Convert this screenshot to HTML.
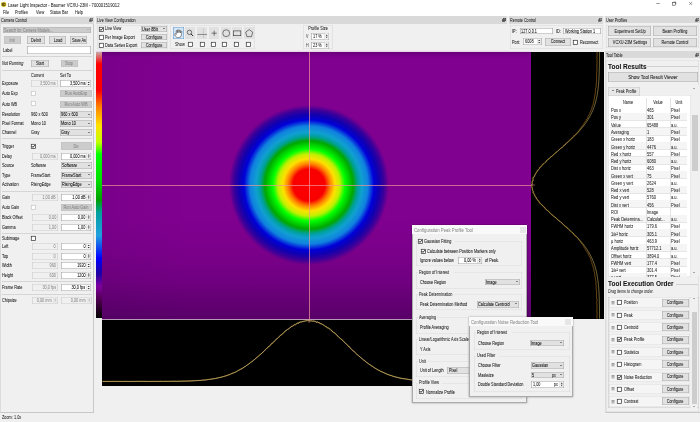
<!DOCTYPE html><html><head><meta charset="utf-8"><style>
html,body{margin:0;padding:0;width:700px;height:422px;overflow:hidden;background:#f0f0f0;font-family:"Liberation Sans",sans-serif;position:relative}
.t{position:absolute;white-space:nowrap;font-family:"Liberation Sans",sans-serif;-webkit-text-stroke:0.04px currentColor}
.r{position:absolute;box-sizing:border-box}svg{overflow:visible}
</style></head><body><div id="root" style="position:absolute;left:0;top:0;width:700px;height:422px;overflow:hidden;will-change:transform">
<div class="r" style="left:0px;top:0px;width:700px;height:16px;background:#ffffff;"></div>
<svg class="r" style="left:0.8px;top:1.6px" width="5.4" height="4.8" viewBox="0 0 11 10"><rect x="0.3" y="0.3" width="10.4" height="9.4" rx="3" fill="#e3c400"/><path d="M2.6 2 V8 M4.6 2 V8 H6.2 Q8.6 8 8.6 5 Q8.6 2 6.2 2 Z" fill="none" stroke="#222" stroke-width="1.5"/></svg>
<div class="t" style="left:8.20px;transform-origin:0 50%;top:1.50px;font-size:5.24px;line-height:6.81px;color:#222;transform:scaleX(0.800);">Laser Light Inspector - Baumer VCXU-23M - 700001519012</div>
<svg class="r" style="left:0;top:0" width="700" height="16" viewBox="0 0 700 16"><path d="M656.3 3.5 H659.8" stroke="#333" stroke-width="0.5"/><rect x="672.6" y="2.6" width="2.6" height="2.6" fill="none" stroke="#333" stroke-width="0.5"/><path d="M673.4 2 H675.8 V4.4" fill="none" stroke="#333" stroke-width="0.5"/><path d="M689.3 2.1 L692.1 4.9 M692.1 2.1 L689.3 4.9" stroke="#333" stroke-width="0.5"/></svg>
<div class="t" style="left:3.00px;transform-origin:0 50%;top:9.87px;font-size:4.81px;line-height:6.26px;color:#222;transform:scaleX(0.800);">File</div>
<div class="t" style="left:15.00px;transform-origin:0 50%;top:9.87px;font-size:4.81px;line-height:6.26px;color:#222;transform:scaleX(0.800);">Profiles</div>
<div class="t" style="left:35.50px;transform-origin:0 50%;top:9.87px;font-size:4.81px;line-height:6.26px;color:#222;transform:scaleX(0.800);">View</div>
<div class="t" style="left:50.00px;transform-origin:0 50%;top:9.87px;font-size:4.81px;line-height:6.26px;color:#222;transform:scaleX(0.800);">Status Bar</div>
<div class="t" style="left:75.00px;transform-origin:0 50%;top:9.87px;font-size:4.81px;line-height:6.26px;color:#222;transform:scaleX(0.800);">Help</div>
<div class="r" style="left:0px;top:16.5px;width:93.5px;height:7.199999999999999px;background:#d9d9d9;"></div>
<div class="t" style="left:1.20px;transform-origin:0 50%;top:17.99px;font-size:4.62px;line-height:6.01px;color:#222;transform:scaleX(0.800);">Camera Control</div>
<svg class="r" style="left:88.5px;top:18.1px" width="4" height="4" viewBox="0 0 8 8"><rect x="2.5" y="0.5" width="5" height="5" fill="none" stroke="#444" stroke-width="1"/><rect x="0.5" y="2.5" width="5" height="5" fill="#555"/></svg>
<div class="r" style="left:0px;top:23.7px;width:93.5px;height:389.3px;background:#f0f0f0;border-right:0.8px solid #c8c8c8;border-bottom:0.8px solid #c8c8c8;border-left:0.8px solid #dcdcdc"></div>
<div class="r" style="left:3.1px;top:26.5px;width:87.60000000000001px;height:6.700000000000003px;background:#cccccc;box-shadow:inset 0 0 0 0.6px #adadad;"></div>
<div class="t" style="left:4.30px;transform-origin:0 50%;top:27.62px;font-size:4.81px;line-height:6.26px;color:#838383;transform:scaleX(0.800);">Search for Camera Models...</div>
<div class="r" style="left:86.7px;top:29.25px;width:0;height:0;border-left:1.3px solid transparent;border-right:1.3px solid transparent;border-top:1.5px solid #999"></div>
<div class="r" style="left:3.6px;top:36px;width:17.4px;height:7.899999999999999px;background:#cccccc;box-shadow:inset 0 0 0 0.6px #bfbfbf;"></div>
<div class="t" style="left:-37.70px;width:100px;text-align:center;transform-origin:50% 50%;top:37.72px;font-size:4.81px;line-height:6.26px;color:#838383;transform:scaleX(0.800);">Init</div>
<div class="r" style="left:27.3px;top:36px;width:17.499999999999996px;height:7.899999999999999px;background:#e1e1e1;box-shadow:inset 0 0 0 0.6px #adadad;"></div>
<div class="t" style="left:-13.95px;width:100px;text-align:center;transform-origin:50% 50%;top:37.72px;font-size:4.81px;line-height:6.26px;color:#111;transform:scaleX(0.800);">DeInit</div>
<div class="r" style="left:49.2px;top:36px;width:17.200000000000003px;height:7.899999999999999px;background:#e1e1e1;box-shadow:inset 0 0 0 0.6px #adadad;"></div>
<div class="t" style="left:7.80px;width:100px;text-align:center;transform-origin:50% 50%;top:37.72px;font-size:4.81px;line-height:6.26px;color:#111;transform:scaleX(0.800);">Load</div>
<div class="r" style="left:70.3px;top:36px;width:17.200000000000003px;height:7.899999999999999px;background:#e1e1e1;box-shadow:inset 0 0 0 0.6px #adadad;"></div>
<div class="t" style="left:28.90px;width:100px;text-align:center;transform-origin:50% 50%;top:37.72px;font-size:4.81px;line-height:6.26px;color:#111;transform:scaleX(0.800);">Save As</div>
<div class="t" style="left:3.00px;transform-origin:0 50%;top:47.77px;font-size:4.81px;line-height:6.26px;color:#111;transform:scaleX(0.800);">Label</div>
<div class="r" style="left:27px;top:46.3px;width:63.5px;height:7.300000000000004px;background:#ffffff;box-shadow:inset 0 0 0 0.6px #a0a0a0;"></div>
<div class="t" style="right:611.00px;transform-origin:100% 50%;top:47.72px;font-size:4.81px;line-height:6.26px;color:#000;transform:scaleX(0.800);"></div>
<div class="r" style="left:2px;top:55.7px;width:89.5px;height:0.6000000000000014px;background:#d5d5d5;"></div>
<div class="t" style="left:2.00px;transform-origin:0 50%;top:61.27px;font-size:4.81px;line-height:6.26px;color:#111;font-style:italic;transform:scaleX(0.800);">Not Running</div>
<div class="r" style="left:31px;top:59.5px;width:18px;height:7.5px;background:#e1e1e1;box-shadow:inset 0 0 0 0.6px #adadad;"></div>
<div class="t" style="left:-10.00px;width:100px;text-align:center;transform-origin:50% 50%;top:61.02px;font-size:4.81px;line-height:6.26px;color:#111;transform:scaleX(0.800);">Start</div>
<div class="r" style="left:60.5px;top:59.5px;width:17.5px;height:7.5px;background:#cccccc;box-shadow:inset 0 0 0 0.6px #bfbfbf;"></div>
<div class="t" style="left:19.25px;width:100px;text-align:center;transform-origin:50% 50%;top:61.02px;font-size:4.81px;line-height:6.26px;color:#838383;transform:scaleX(0.800);">Stop</div>
<div class="r" style="left:2px;top:69.5px;width:89.5px;height:0.5999999999999943px;background:#d5d5d5;"></div>
<div class="t" style="left:31.00px;transform-origin:0 50%;top:73.27px;font-size:4.81px;line-height:6.26px;color:#111;transform:scaleX(0.800);">Current</div>
<div class="t" style="left:60.00px;transform-origin:0 50%;top:73.27px;font-size:4.81px;line-height:6.26px;color:#111;transform:scaleX(0.800);">Set To</div>
<div class="t" style="left:2.00px;transform-origin:0 50%;top:81.17px;font-size:4.81px;line-height:6.26px;color:#111;transform:scaleX(0.800);">Exposure</div>
<div class="r" style="left:31px;top:80px;width:26.5px;height:7px;background:#f0f0f0;box-shadow:inset 0 0 0 0.6px #cccccc;"></div>
<div class="t" style="right:644.00px;transform-origin:100% 50%;top:81.27px;font-size:4.81px;line-height:6.26px;color:#8a8a8a;transform:scaleX(0.800);">3,500 ms</div>
<div class="r" style="left:60px;top:80px;width:31px;height:7px;background:#ffffff;box-shadow:inset 0 0 0 0.6px #a0a0a0;"></div>
<div class="t" style="right:614.60px;transform-origin:100% 50%;top:81.27px;font-size:4.81px;line-height:6.26px;color:#000;transform:scaleX(0.800);">3,500 ms</div>
<svg class="r" style="left:0;top:0" width="1" height="1" viewBox="0 0 1 1"><rect x="86.70" y="80.60" width="3.7" height="5.80" fill="#f4f4f4" stroke="#c8c8c8" stroke-width="0.4"/><path d="M87.70 83.00 L89.70 83.00 L88.70 81.70 Z M87.70 84.00 L89.70 84.00 L88.70 85.30 Z" fill="#222"/></svg>
<div class="t" style="left:2.00px;transform-origin:0 50%;top:91.47px;font-size:4.81px;line-height:6.26px;color:#111;transform:scaleX(0.800);">Auto Exp</div>
<svg class="r" style="left:31px;top:90.9px" width="4.7" height="4.7" viewBox="0 0 10 10"><rect x="0.6" y="0.6" width="8.8" height="8.8" fill="#fff" stroke="#c4c4c4" stroke-width="1.5"/></svg>
<div class="r" style="left:60px;top:90px;width:31.5px;height:7px;background:#cccccc;box-shadow:inset 0 0 0 0.6px #bfbfbf;"></div>
<div class="t" style="left:25.75px;width:100px;text-align:center;transform-origin:50% 50%;top:91.27px;font-size:4.81px;line-height:6.26px;color:#838383;transform:scaleX(0.800);">Run AutoExp</div>
<div class="t" style="left:2.00px;transform-origin:0 50%;top:101.77px;font-size:4.81px;line-height:6.26px;color:#111;transform:scaleX(0.800);">Auto WB</div>
<svg class="r" style="left:31px;top:101.1px" width="4.7" height="4.7" viewBox="0 0 10 10"><rect x="0.6" y="0.6" width="8.8" height="8.8" fill="#fff" stroke="#c4c4c4" stroke-width="1.5"/></svg>
<div class="r" style="left:60px;top:100.5px;width:31.5px;height:7.0px;background:#cccccc;box-shadow:inset 0 0 0 0.6px #bfbfbf;"></div>
<div class="t" style="left:25.75px;width:100px;text-align:center;transform-origin:50% 50%;top:101.77px;font-size:4.81px;line-height:6.26px;color:#838383;transform:scaleX(0.800);">Run Auto WB</div>
<div class="t" style="left:2.00px;transform-origin:0 50%;top:111.77px;font-size:4.81px;line-height:6.26px;color:#111;transform:scaleX(0.800);">Resolution</div>
<div class="t" style="left:31.00px;transform-origin:0 50%;top:111.77px;font-size:4.81px;line-height:6.26px;color:#111;transform:scaleX(0.800);">960 x 600</div>
<div class="r" style="left:60px;top:111px;width:31.5px;height:7px;background:#e1e1e1;box-shadow:inset 0 0 0 0.6px #adadad;"></div>
<div class="t" style="left:61.20px;transform-origin:0 50%;top:112.27px;font-size:4.81px;line-height:6.26px;color:#000;transform:scaleX(0.800);">960 x 600</div>
<div class="r" style="left:87.5px;top:113.9px;width:0;height:0;border-left:1.3px solid transparent;border-right:1.3px solid transparent;border-top:1.5px solid #222"></div>
<div class="t" style="left:2.00px;transform-origin:0 50%;top:121.27px;font-size:4.81px;line-height:6.26px;color:#111;transform:scaleX(0.800);">Pixel Format</div>
<div class="t" style="left:31.00px;transform-origin:0 50%;top:121.27px;font-size:4.81px;line-height:6.26px;color:#111;transform:scaleX(0.800);">Mono 10</div>
<div class="r" style="left:60px;top:120.3px;width:31.5px;height:6.700000000000003px;background:#e1e1e1;box-shadow:inset 0 0 0 0.6px #adadad;"></div>
<div class="t" style="left:61.20px;transform-origin:0 50%;top:121.42px;font-size:4.81px;line-height:6.26px;color:#000;transform:scaleX(0.800);">Mono 10</div>
<div class="r" style="left:87.5px;top:123.05000000000001px;width:0;height:0;border-left:1.3px solid transparent;border-right:1.3px solid transparent;border-top:1.5px solid #222"></div>
<div class="t" style="left:2.00px;transform-origin:0 50%;top:130.27px;font-size:4.81px;line-height:6.26px;color:#111;transform:scaleX(0.800);">Channel</div>
<div class="t" style="left:31.00px;transform-origin:0 50%;top:130.27px;font-size:4.81px;line-height:6.26px;color:#111;transform:scaleX(0.800);">Gray</div>
<div class="r" style="left:60px;top:129.3px;width:31.5px;height:6.699999999999989px;background:#e1e1e1;box-shadow:inset 0 0 0 0.6px #adadad;"></div>
<div class="t" style="left:61.20px;transform-origin:0 50%;top:130.42px;font-size:4.81px;line-height:6.26px;color:#000;transform:scaleX(0.800);">Gray</div>
<div class="r" style="left:87.5px;top:132.05px;width:0;height:0;border-left:1.3px solid transparent;border-right:1.3px solid transparent;border-top:1.5px solid #222"></div>
<div class="r" style="left:2px;top:138px;width:89.5px;height:0.5999999999999943px;background:#d5d5d5;"></div>
<div class="t" style="left:2.00px;transform-origin:0 50%;top:143.77px;font-size:4.81px;line-height:6.26px;color:#111;transform:scaleX(0.800);">Trigger</div>
<svg class="r" style="left:31px;top:143.8px" width="4.7" height="4.7" viewBox="0 0 10 10"><rect x="0.6" y="0.6" width="8.8" height="8.8" fill="#fff" stroke="#333" stroke-width="1.5"/><path d="M1.8 4.6 L4.2 7.2 L8.4 2.4" fill="none" stroke="#222" stroke-width="2.1"/></svg>
<div class="r" style="left:60.5px;top:142px;width:31.5px;height:8px;background:#cccccc;box-shadow:inset 0 0 0 0.6px #bfbfbf;"></div>
<div class="t" style="left:26.25px;width:100px;text-align:center;transform-origin:50% 50%;top:143.77px;font-size:4.81px;line-height:6.26px;color:#838383;transform:scaleX(0.800);">Do</div>
<div class="t" style="left:2.00px;transform-origin:0 50%;top:153.77px;font-size:4.81px;line-height:6.26px;color:#111;transform:scaleX(0.800);">Delay</div>
<div class="r" style="left:31.5px;top:152.5px;width:26.0px;height:7.0px;background:#f0f0f0;box-shadow:inset 0 0 0 0.6px #cccccc;"></div>
<div class="t" style="right:644.00px;transform-origin:100% 50%;top:153.77px;font-size:4.81px;line-height:6.26px;color:#8a8a8a;transform:scaleX(0.800);">0,000 ms</div>
<div class="r" style="left:60.5px;top:152.5px;width:30.5px;height:7.0px;background:#ffffff;box-shadow:inset 0 0 0 0.6px #a0a0a0;"></div>
<div class="t" style="right:614.60px;transform-origin:100% 50%;top:153.77px;font-size:4.81px;line-height:6.26px;color:#000;transform:scaleX(0.800);">0,000 ms</div>
<svg class="r" style="left:0;top:0" width="1" height="1" viewBox="0 0 1 1"><rect x="86.70" y="153.10" width="3.7" height="5.80" fill="#f4f4f4" stroke="#c8c8c8" stroke-width="0.4"/><path d="M87.70 155.50 L89.70 155.50 L88.70 154.20 Z M87.70 156.50 L89.70 156.50 L88.70 157.80 Z" fill="#222"/></svg>
<div class="t" style="left:2.00px;transform-origin:0 50%;top:163.27px;font-size:4.81px;line-height:6.26px;color:#111;transform:scaleX(0.800);">Source</div>
<div class="t" style="left:31.00px;transform-origin:0 50%;top:163.27px;font-size:4.81px;line-height:6.26px;color:#111;transform:scaleX(0.800);">Software</div>
<div class="r" style="left:60.5px;top:162px;width:31.0px;height:7px;background:#e1e1e1;box-shadow:inset 0 0 0 0.6px #adadad;"></div>
<div class="t" style="left:61.70px;transform-origin:0 50%;top:163.27px;font-size:4.81px;line-height:6.26px;color:#000;transform:scaleX(0.800);">Software</div>
<div class="r" style="left:87.5px;top:164.9px;width:0;height:0;border-left:1.3px solid transparent;border-right:1.3px solid transparent;border-top:1.5px solid #222"></div>
<div class="t" style="left:2.00px;transform-origin:0 50%;top:172.77px;font-size:4.81px;line-height:6.26px;color:#111;transform:scaleX(0.800);">Type</div>
<div class="t" style="left:31.00px;transform-origin:0 50%;top:172.77px;font-size:4.81px;line-height:6.26px;color:#111;transform:scaleX(0.800);">FrameStart</div>
<div class="r" style="left:60.5px;top:171.5px;width:31.0px;height:7.0px;background:#e1e1e1;box-shadow:inset 0 0 0 0.6px #adadad;"></div>
<div class="t" style="left:61.70px;transform-origin:0 50%;top:172.77px;font-size:4.81px;line-height:6.26px;color:#000;transform:scaleX(0.800);">FrameStart</div>
<div class="r" style="left:87.5px;top:174.4px;width:0;height:0;border-left:1.3px solid transparent;border-right:1.3px solid transparent;border-top:1.5px solid #222"></div>
<div class="t" style="left:2.00px;transform-origin:0 50%;top:182.27px;font-size:4.81px;line-height:6.26px;color:#111;transform:scaleX(0.800);">Activation</div>
<div class="t" style="left:31.00px;transform-origin:0 50%;top:182.27px;font-size:4.81px;line-height:6.26px;color:#111;transform:scaleX(0.800);">RisingEdge</div>
<div class="r" style="left:60.5px;top:181px;width:31.0px;height:7px;background:#e1e1e1;box-shadow:inset 0 0 0 0.6px #adadad;"></div>
<div class="t" style="left:61.70px;transform-origin:0 50%;top:182.27px;font-size:4.81px;line-height:6.26px;color:#000;transform:scaleX(0.800);">RisingEdge</div>
<div class="r" style="left:87.5px;top:183.9px;width:0;height:0;border-left:1.3px solid transparent;border-right:1.3px solid transparent;border-top:1.5px solid #222"></div>
<div class="r" style="left:2px;top:190.8px;width:89.5px;height:0.5999999999999943px;background:#d5d5d5;"></div>
<div class="t" style="left:2.00px;transform-origin:0 50%;top:194.77px;font-size:4.81px;line-height:6.26px;color:#111;transform:scaleX(0.800);">Gain</div>
<div class="r" style="left:31.5px;top:193.5px;width:26.0px;height:7.0px;background:#f0f0f0;box-shadow:inset 0 0 0 0.6px #cccccc;"></div>
<div class="t" style="right:644.00px;transform-origin:100% 50%;top:194.77px;font-size:4.81px;line-height:6.26px;color:#8a8a8a;transform:scaleX(0.800);">1,00 dB</div>
<div class="r" style="left:60.5px;top:193.5px;width:30.5px;height:7.0px;background:#ffffff;box-shadow:inset 0 0 0 0.6px #a0a0a0;"></div>
<div class="t" style="right:614.60px;transform-origin:100% 50%;top:194.77px;font-size:4.81px;line-height:6.26px;color:#000;transform:scaleX(0.800);">1,00 dB</div>
<svg class="r" style="left:0;top:0" width="1" height="1" viewBox="0 0 1 1"><rect x="86.70" y="194.10" width="3.7" height="5.80" fill="#f4f4f4" stroke="#c8c8c8" stroke-width="0.4"/><path d="M87.70 196.50 L89.70 196.50 L88.70 195.20 Z M87.70 197.50 L89.70 197.50 L88.70 198.80 Z" fill="#222"/></svg>
<div class="t" style="left:2.00px;transform-origin:0 50%;top:205.27px;font-size:4.81px;line-height:6.26px;color:#111;transform:scaleX(0.800);">Auto Gain</div>
<svg class="r" style="left:31px;top:205px" width="4.7" height="4.7" viewBox="0 0 10 10"><rect x="0.6" y="0.6" width="8.8" height="8.8" fill="#fff" stroke="#c4c4c4" stroke-width="1.5"/></svg>
<div class="r" style="left:60.5px;top:203.5px;width:31.5px;height:7.5px;background:#cccccc;box-shadow:inset 0 0 0 0.6px #bfbfbf;"></div>
<div class="t" style="left:26.25px;width:100px;text-align:center;transform-origin:50% 50%;top:205.02px;font-size:4.81px;line-height:6.26px;color:#838383;transform:scaleX(0.800);">Run Auto Gain</div>
<div class="t" style="left:2.00px;transform-origin:0 50%;top:214.77px;font-size:4.81px;line-height:6.26px;color:#111;transform:scaleX(0.800);">Black Offset</div>
<div class="r" style="left:31.5px;top:213.5px;width:26.0px;height:7.0px;background:#f0f0f0;box-shadow:inset 0 0 0 0.6px #cccccc;"></div>
<div class="t" style="right:644.00px;transform-origin:100% 50%;top:214.77px;font-size:4.81px;line-height:6.26px;color:#8a8a8a;transform:scaleX(0.800);">0,00</div>
<div class="r" style="left:60.5px;top:213.5px;width:30.5px;height:7.0px;background:#ffffff;box-shadow:inset 0 0 0 0.6px #a0a0a0;"></div>
<div class="t" style="right:614.60px;transform-origin:100% 50%;top:214.77px;font-size:4.81px;line-height:6.26px;color:#000;transform:scaleX(0.800);">0,00</div>
<svg class="r" style="left:0;top:0" width="1" height="1" viewBox="0 0 1 1"><rect x="86.70" y="214.10" width="3.7" height="5.80" fill="#f4f4f4" stroke="#c8c8c8" stroke-width="0.4"/><path d="M87.70 216.50 L89.70 216.50 L88.70 215.20 Z M87.70 217.50 L89.70 217.50 L88.70 218.80 Z" fill="#222"/></svg>
<div class="t" style="left:2.00px;transform-origin:0 50%;top:224.77px;font-size:4.81px;line-height:6.26px;color:#111;transform:scaleX(0.800);">Gamma</div>
<div class="r" style="left:31.5px;top:223.5px;width:26.0px;height:7.0px;background:#f0f0f0;box-shadow:inset 0 0 0 0.6px #cccccc;"></div>
<div class="t" style="right:644.00px;transform-origin:100% 50%;top:224.77px;font-size:4.81px;line-height:6.26px;color:#8a8a8a;transform:scaleX(0.800);">1,00</div>
<div class="r" style="left:60.5px;top:223.5px;width:30.5px;height:7.0px;background:#ffffff;box-shadow:inset 0 0 0 0.6px #a0a0a0;"></div>
<div class="t" style="right:614.60px;transform-origin:100% 50%;top:224.77px;font-size:4.81px;line-height:6.26px;color:#000;transform:scaleX(0.800);">1,00</div>
<svg class="r" style="left:0;top:0" width="1" height="1" viewBox="0 0 1 1"><rect x="86.70" y="224.10" width="3.7" height="5.80" fill="#f4f4f4" stroke="#c8c8c8" stroke-width="0.4"/><path d="M87.70 226.50 L89.70 226.50 L88.70 225.20 Z M87.70 227.50 L89.70 227.50 L88.70 228.80 Z" fill="#222"/></svg>
<div class="r" style="left:2px;top:232.5px;width:89.5px;height:0.5999999999999943px;background:#d5d5d5;"></div>
<div class="t" style="left:2.00px;transform-origin:0 50%;top:235.77px;font-size:4.81px;line-height:6.26px;color:#111;transform:scaleX(0.800);">Subimage</div>
<svg class="r" style="left:31px;top:236px" width="4.7" height="4.7" viewBox="0 0 10 10"><rect x="0.6" y="0.6" width="8.8" height="8.8" fill="#fff" stroke="#333" stroke-width="1.5"/></svg>
<div class="t" style="left:2.00px;transform-origin:0 50%;top:244.27px;font-size:4.81px;line-height:6.26px;color:#111;transform:scaleX(0.800);">Left</div>
<div class="r" style="left:31.5px;top:243px;width:26.0px;height:7px;background:#f0f0f0;box-shadow:inset 0 0 0 0.6px #cccccc;"></div>
<div class="t" style="right:644.00px;transform-origin:100% 50%;top:244.27px;font-size:4.81px;line-height:6.26px;color:#8a8a8a;transform:scaleX(0.800);">0</div>
<div class="r" style="left:60.5px;top:243px;width:30.5px;height:7px;background:#ffffff;box-shadow:inset 0 0 0 0.6px #a0a0a0;"></div>
<div class="t" style="right:614.60px;transform-origin:100% 50%;top:244.27px;font-size:4.81px;line-height:6.26px;color:#000;transform:scaleX(0.800);">0</div>
<svg class="r" style="left:0;top:0" width="1" height="1" viewBox="0 0 1 1"><rect x="86.70" y="243.60" width="3.7" height="5.80" fill="#f4f4f4" stroke="#c8c8c8" stroke-width="0.4"/><path d="M87.70 246.00 L89.70 246.00 L88.70 244.70 Z M87.70 247.00 L89.70 247.00 L88.70 248.30 Z" fill="#222"/></svg>
<div class="t" style="left:2.00px;transform-origin:0 50%;top:253.77px;font-size:4.81px;line-height:6.26px;color:#111;transform:scaleX(0.800);">Top</div>
<div class="r" style="left:31.5px;top:252.5px;width:26.0px;height:7.0px;background:#f0f0f0;box-shadow:inset 0 0 0 0.6px #cccccc;"></div>
<div class="t" style="right:644.00px;transform-origin:100% 50%;top:253.77px;font-size:4.81px;line-height:6.26px;color:#8a8a8a;transform:scaleX(0.800);">0</div>
<div class="r" style="left:60.5px;top:252.5px;width:30.5px;height:7.0px;background:#ffffff;box-shadow:inset 0 0 0 0.6px #a0a0a0;"></div>
<div class="t" style="right:614.60px;transform-origin:100% 50%;top:253.77px;font-size:4.81px;line-height:6.26px;color:#000;transform:scaleX(0.800);">0</div>
<svg class="r" style="left:0;top:0" width="1" height="1" viewBox="0 0 1 1"><rect x="86.70" y="253.10" width="3.7" height="5.80" fill="#f4f4f4" stroke="#c8c8c8" stroke-width="0.4"/><path d="M87.70 255.50 L89.70 255.50 L88.70 254.20 Z M87.70 256.50 L89.70 256.50 L88.70 257.80 Z" fill="#222"/></svg>
<div class="t" style="left:2.00px;transform-origin:0 50%;top:263.27px;font-size:4.81px;line-height:6.26px;color:#111;transform:scaleX(0.800);">Width</div>
<div class="r" style="left:31.5px;top:262px;width:26.0px;height:7px;background:#f0f0f0;box-shadow:inset 0 0 0 0.6px #cccccc;"></div>
<div class="t" style="right:644.00px;transform-origin:100% 50%;top:263.27px;font-size:4.81px;line-height:6.26px;color:#8a8a8a;transform:scaleX(0.800);">960</div>
<div class="r" style="left:60.5px;top:262px;width:30.5px;height:7px;background:#ffffff;box-shadow:inset 0 0 0 0.6px #a0a0a0;"></div>
<div class="t" style="right:614.60px;transform-origin:100% 50%;top:263.27px;font-size:4.81px;line-height:6.26px;color:#000;transform:scaleX(0.800);">1920</div>
<svg class="r" style="left:0;top:0" width="1" height="1" viewBox="0 0 1 1"><rect x="86.70" y="262.60" width="3.7" height="5.80" fill="#f4f4f4" stroke="#c8c8c8" stroke-width="0.4"/><path d="M87.70 265.00 L89.70 265.00 L88.70 263.70 Z M87.70 266.00 L89.70 266.00 L88.70 267.30 Z" fill="#222"/></svg>
<div class="t" style="left:2.00px;transform-origin:0 50%;top:272.77px;font-size:4.81px;line-height:6.26px;color:#111;transform:scaleX(0.800);">Height</div>
<div class="r" style="left:31.5px;top:271.5px;width:26.0px;height:7.0px;background:#f0f0f0;box-shadow:inset 0 0 0 0.6px #cccccc;"></div>
<div class="t" style="right:644.00px;transform-origin:100% 50%;top:272.77px;font-size:4.81px;line-height:6.26px;color:#8a8a8a;transform:scaleX(0.800);">600</div>
<div class="r" style="left:60.5px;top:271.5px;width:30.5px;height:7.0px;background:#ffffff;box-shadow:inset 0 0 0 0.6px #a0a0a0;"></div>
<div class="t" style="right:614.60px;transform-origin:100% 50%;top:272.77px;font-size:4.81px;line-height:6.26px;color:#000;transform:scaleX(0.800);">1200</div>
<svg class="r" style="left:0;top:0" width="1" height="1" viewBox="0 0 1 1"><rect x="86.70" y="272.10" width="3.7" height="5.80" fill="#f4f4f4" stroke="#c8c8c8" stroke-width="0.4"/><path d="M87.70 274.50 L89.70 274.50 L88.70 273.20 Z M87.70 275.50 L89.70 275.50 L88.70 276.80 Z" fill="#222"/></svg>
<div class="r" style="left:2px;top:280.5px;width:89.5px;height:0.6000000000000227px;background:#d5d5d5;"></div>
<div class="t" style="left:2.00px;transform-origin:0 50%;top:285.27px;font-size:4.81px;line-height:6.26px;color:#111;transform:scaleX(0.800);">Frame Rate</div>
<div class="r" style="left:31.5px;top:284px;width:26.0px;height:7px;background:#f0f0f0;box-shadow:inset 0 0 0 0.6px #cccccc;"></div>
<div class="t" style="right:644.00px;transform-origin:100% 50%;top:285.27px;font-size:4.81px;line-height:6.26px;color:#8a8a8a;transform:scaleX(0.800);">30,0 fps</div>
<div class="r" style="left:60.5px;top:284px;width:30.5px;height:7px;background:#ffffff;box-shadow:inset 0 0 0 0.6px #a0a0a0;"></div>
<div class="t" style="right:614.60px;transform-origin:100% 50%;top:285.27px;font-size:4.81px;line-height:6.26px;color:#000;transform:scaleX(0.800);">30,0 fps</div>
<svg class="r" style="left:0;top:0" width="1" height="1" viewBox="0 0 1 1"><rect x="86.70" y="284.60" width="3.7" height="5.80" fill="#f4f4f4" stroke="#c8c8c8" stroke-width="0.4"/><path d="M87.70 287.00 L89.70 287.00 L88.70 285.70 Z M87.70 288.00 L89.70 288.00 L88.70 289.30 Z" fill="#222"/></svg>
<div class="r" style="left:2px;top:293.5px;width:89.5px;height:0.6000000000000227px;background:#d5d5d5;"></div>
<div class="t" style="left:2.00px;transform-origin:0 50%;top:297.77px;font-size:4.81px;line-height:6.26px;color:#111;transform:scaleX(0.800);">Chipsize</div>
<div class="r" style="left:31.5px;top:296.5px;width:26.0px;height:7.0px;background:#f0f0f0;box-shadow:inset 0 0 0 0.6px #cccccc;"></div>
<div class="t" style="right:648.10px;transform-origin:100% 50%;top:297.77px;font-size:4.81px;line-height:6.26px;color:#8a8a8a;transform:scaleX(0.800);">0,00 mm</div>
<svg class="r" style="left:0;top:0" width="1" height="1" viewBox="0 0 1 1"><rect x="53.20" y="297.10" width="3.7" height="5.80" fill="#f0f0f0" stroke="#dddddd" stroke-width="0.4"/><path d="M54.20 299.50 L56.20 299.50 L55.20 298.20 Z M54.20 300.50 L56.20 300.50 L55.20 301.80 Z" fill="#aaa"/></svg>
<div class="r" style="left:60.5px;top:296.5px;width:31.0px;height:7.0px;background:#f0f0f0;box-shadow:inset 0 0 0 0.6px #cccccc;"></div>
<div class="t" style="right:614.10px;transform-origin:100% 50%;top:297.77px;font-size:4.81px;line-height:6.26px;color:#8a8a8a;transform:scaleX(0.800);">0,00 mm</div>
<svg class="r" style="left:0;top:0" width="1" height="1" viewBox="0 0 1 1"><rect x="87.20" y="297.10" width="3.7" height="5.80" fill="#f0f0f0" stroke="#dddddd" stroke-width="0.4"/><path d="M88.20 299.50 L90.20 299.50 L89.20 298.20 Z M88.20 300.50 L90.20 300.50 L89.20 301.80 Z" fill="#aaa"/></svg>
<div class="t" style="left:2.00px;transform-origin:0 50%;top:415.27px;font-size:4.81px;line-height:6.26px;color:#222;transform:scaleX(0.800);">Zoom: 1.0x</div>
<div class="r" style="left:95.7px;top:16.3px;width:411.6px;height:7.399999999999999px;background:#d9d9d9;"></div>
<div class="t" style="left:96.90px;transform-origin:0 50%;top:17.89px;font-size:4.62px;line-height:6.01px;color:#222;transform:scaleX(0.800);">Live View Configuration</div>
<svg class="r" style="left:502.3px;top:18.0px" width="4" height="4" viewBox="0 0 8 8"><rect x="2.5" y="0.5" width="5" height="5" fill="none" stroke="#444" stroke-width="1"/><rect x="0.5" y="2.5" width="5" height="5" fill="#555"/></svg>
<div class="r" style="left:95.7px;top:23.7px;width:411.6px;height:27.8px;background:#f0f0f0;"></div>
<div class="r" style="left:96.6px;top:24.5px;width:71.9px;height:24.9px;background:#f0f0f0;box-shadow:inset 0 0 0 0.6px #dadada;"></div>
<svg class="r" style="left:98.5px;top:26.5px" width="4.7" height="4.7" viewBox="0 0 10 10"><rect x="0.6" y="0.6" width="8.8" height="8.8" fill="#fff" stroke="#333" stroke-width="1.5"/><path d="M1.8 4.6 L4.2 7.2 L8.4 2.4" fill="none" stroke="#222" stroke-width="2.1"/></svg>
<div class="t" style="left:105.00px;transform-origin:0 50%;top:26.47px;font-size:4.81px;line-height:6.26px;color:#111;transform:scaleX(0.800);">Live View</div>
<svg class="r" style="left:98.5px;top:34.5px" width="4.7" height="4.7" viewBox="0 0 10 10"><rect x="0.6" y="0.6" width="8.8" height="8.8" fill="#fff" stroke="#333" stroke-width="1.5"/></svg>
<div class="t" style="left:105.00px;transform-origin:0 50%;top:34.57px;font-size:4.81px;line-height:6.26px;color:#111;transform:scaleX(0.800);">Per Image Export</div>
<svg class="r" style="left:98.5px;top:42.5px" width="4.7" height="4.7" viewBox="0 0 10 10"><rect x="0.6" y="0.6" width="8.8" height="8.8" fill="#fff" stroke="#333" stroke-width="1.5"/></svg>
<div class="t" style="left:105.00px;transform-origin:0 50%;top:42.57px;font-size:4.81px;line-height:6.26px;color:#111;transform:scaleX(0.800);">Data Series Export</div>
<div class="r" style="left:140.5px;top:25.5px;width:26.0px;height:6.5px;background:#e1e1e1;box-shadow:inset 0 0 0 0.6px #adadad;"></div>
<div class="t" style="left:141.70px;transform-origin:0 50%;top:26.52px;font-size:4.81px;line-height:6.26px;color:#000;transform:scaleX(0.800);">User 8Bit</div>
<div class="r" style="left:162.5px;top:28.15px;width:0;height:0;border-left:1.3px solid transparent;border-right:1.3px solid transparent;border-top:1.5px solid #222"></div>
<div class="r" style="left:140.5px;top:34px;width:26.0px;height:6px;background:#e1e1e1;box-shadow:inset 0 0 0 0.6px #adadad;"></div>
<div class="t" style="left:103.50px;width:100px;text-align:center;transform-origin:50% 50%;top:34.77px;font-size:4.81px;line-height:6.26px;color:#111;transform:scaleX(0.800);">Configure</div>
<div class="r" style="left:140.5px;top:41.5px;width:26.0px;height:6.5px;background:#e1e1e1;box-shadow:inset 0 0 0 0.6px #adadad;"></div>
<div class="t" style="left:103.50px;width:100px;text-align:center;transform-origin:50% 50%;top:42.52px;font-size:4.81px;line-height:6.26px;color:#111;transform:scaleX(0.800);">Configure</div>
<div class="r" style="left:169.7px;top:24.5px;width:85.30000000000001px;height:24.9px;background:#f0f0f0;box-shadow:inset 0 0 0 0.6px #dadada;"></div>
<div class="r" style="left:172.9px;top:27.3px;width:10.800000000000011px;height:11.400000000000002px;background:#d3e6f7;box-shadow:inset 0 0 0 0.6px #6a9ccc;"></div>
<div class="r" style="left:185px;top:27.3px;width:10.300000000000011px;height:11.400000000000002px;background:#e1e1e1;"></div>
<div class="r" style="left:197px;top:27.3px;width:10.300000000000011px;height:11.400000000000002px;background:#e1e1e1;"></div>
<div class="r" style="left:209px;top:27.3px;width:10.300000000000011px;height:11.400000000000002px;background:#e1e1e1;"></div>
<div class="r" style="left:220.5px;top:27.3px;width:10.300000000000011px;height:11.400000000000002px;background:#e1e1e1;"></div>
<div class="r" style="left:232px;top:27.3px;width:10.300000000000011px;height:11.400000000000002px;background:#e1e1e1;"></div>
<div class="r" style="left:244px;top:27.3px;width:10.300000000000011px;height:11.400000000000002px;background:#e1e1e1;"></div>
<svg class="r" style="left:173.3px;top:27.8px" width="10.4" height="10.4" viewBox="0 0 10 10"><path d="M3.4 8.8 Q2.2 8 1.7 6.3 Q1.5 5.4 2.3 5.5 L3.2 6.3 L3.1 3 Q3.2 2.3 3.9 2.5 L4.3 4.6 L4.4 1.9 Q5 1.3 5.5 1.9 L5.7 4.5 L6.2 2.1 Q6.8 1.7 7.2 2.3 L7.1 4.8 L7.8 3.2 Q8.4 3 8.5 3.7 Q8.4 6.5 7.6 8.2 Q6.8 9.3 5.2 9.2 Q4.2 9.2 3.4 8.8 Z" fill="#fff" stroke="#333" stroke-width="0.55"/></svg>
<svg class="r" style="left:185px;top:27.8px" width="10.4" height="10.4" viewBox="0 0 10 10"><circle cx="4.3" cy="4.2" r="2.1" fill="none" stroke="#333" stroke-width="0.65"/><path d="M5.8 5.7 L7.8 7.7" stroke="#222" stroke-width="0.95"/></svg>
<svg class="r" style="left:197px;top:27.8px" width="10.4" height="10.4" viewBox="0 0 10 10"><path d="M6.3 0.3 L6.3 9.7" stroke="#c8c8c8" stroke-width="0.8"/><path d="M0.3 6.2 L9.7 6.2" stroke="#555" stroke-width="0.6"/></svg>
<svg class="r" style="left:209px;top:27.8px" width="10.4" height="10.4" viewBox="0 0 10 10"><path d="M2.5 5 L7.5 5 M5 2.5 L5 7.5" stroke="#333" stroke-width="0.6"/></svg>
<svg class="r" style="left:220.5px;top:27.8px" width="10.4" height="10.4" viewBox="0 0 10 10"><circle cx="5" cy="5" r="3.3" fill="none" stroke="#333" stroke-width="0.6"/></svg>
<svg class="r" style="left:232px;top:27.8px" width="10.4" height="10.4" viewBox="0 0 10 10"><rect x="1.5" y="2.8" width="7" height="4.6" fill="none" stroke="#333" stroke-width="0.6"/></svg>
<svg class="r" style="left:244px;top:27.8px" width="10.4" height="10.4" viewBox="0 0 10 10"><path d="M5 1.5 L8.4 4 L7.2 8.3 L2.8 8.3 L1.6 4 Z" fill="none" stroke="#333" stroke-width="0.6"/></svg>
<div class="t" style="left:175.00px;transform-origin:0 50%;top:42.03px;font-size:4.88px;line-height:6.34px;color:#222;transform:scaleX(0.800);">Show</div>
<svg class="r" style="left:188px;top:42px" width="4.7" height="4.7" viewBox="0 0 10 10"><rect x="0.6" y="0.6" width="8.8" height="8.8" fill="#fff" stroke="#333" stroke-width="1.5"/></svg>
<svg class="r" style="left:199.5px;top:42px" width="4.7" height="4.7" viewBox="0 0 10 10"><rect x="0.6" y="0.6" width="8.8" height="8.8" fill="#fff" stroke="#333" stroke-width="1.5"/></svg>
<svg class="r" style="left:211px;top:42px" width="4.7" height="4.7" viewBox="0 0 10 10"><rect x="0.6" y="0.6" width="8.8" height="8.8" fill="#fff" stroke="#333" stroke-width="1.5"/></svg>
<svg class="r" style="left:222.3px;top:42px" width="4.7" height="4.7" viewBox="0 0 10 10"><rect x="0.6" y="0.6" width="8.8" height="8.8" fill="#fff" stroke="#333" stroke-width="1.5"/></svg>
<svg class="r" style="left:234px;top:42px" width="4.7" height="4.7" viewBox="0 0 10 10"><rect x="0.6" y="0.6" width="8.8" height="8.8" fill="#fff" stroke="#333" stroke-width="1.5"/></svg>
<svg class="r" style="left:245.5px;top:42px" width="4.7" height="4.7" viewBox="0 0 10 10"><rect x="0.6" y="0.6" width="8.8" height="8.8" fill="#fff" stroke="#333" stroke-width="1.5"/></svg>
<div class="r" style="left:302.6px;top:24.5px;width:30.0px;height:24.9px;background:#f0f0f0;box-shadow:inset 0 0 0 0.6px #dadada;"></div>
<div class="t" style="left:267.60px;width:100px;text-align:center;transform-origin:50% 50%;top:25.73px;font-size:4.88px;line-height:6.34px;color:#222;transform:scaleX(0.800);">Profile Size</div>
<div class="t" style="left:305.50px;transform-origin:0 50%;top:33.98px;font-size:4.50px;line-height:5.85px;color:#444;transform:scaleX(0.800);">V</div>
<div class="r" style="left:310.5px;top:32.5px;width:18.5px;height:7.5px;background:#ffffff;box-shadow:inset 0 0 0 0.6px #a0a0a0;"></div>
<div class="t" style="right:376.60px;transform-origin:100% 50%;top:34.02px;font-size:4.81px;line-height:6.26px;color:#000;transform:scaleX(0.800);"></div>
<svg class="r" style="left:0;top:0" width="1" height="1" viewBox="0 0 1 1"><rect x="324.70" y="33.10" width="3.7" height="6.30" fill="#f4f4f4" stroke="#c8c8c8" stroke-width="0.4"/><path d="M325.70 35.75 L327.70 35.75 L326.70 34.45 Z M325.70 36.75 L327.70 36.75 L326.70 38.05 Z" fill="#222"/></svg>
<div class="t" style="left:313.00px;transform-origin:0 50%;top:33.97px;font-size:4.81px;line-height:6.26px;color:#111;transform:scaleX(0.800);">17 %</div>
<div class="t" style="left:305.50px;transform-origin:0 50%;top:42.98px;font-size:4.50px;line-height:5.85px;color:#444;transform:scaleX(0.800);">H</div>
<div class="r" style="left:310.5px;top:41.5px;width:18.5px;height:7.5px;background:#ffffff;box-shadow:inset 0 0 0 0.6px #a0a0a0;"></div>
<div class="t" style="right:376.60px;transform-origin:100% 50%;top:43.02px;font-size:4.81px;line-height:6.26px;color:#000;transform:scaleX(0.800);"></div>
<svg class="r" style="left:0;top:0" width="1" height="1" viewBox="0 0 1 1"><rect x="324.70" y="42.10" width="3.7" height="6.30" fill="#f4f4f4" stroke="#c8c8c8" stroke-width="0.4"/><path d="M325.70 44.75 L327.70 44.75 L326.70 43.45 Z M325.70 45.75 L327.70 45.75 L326.70 47.05 Z" fill="#222"/></svg>
<div class="t" style="left:313.00px;transform-origin:0 50%;top:42.97px;font-size:4.81px;line-height:6.26px;color:#111;transform:scaleX(0.800);">23 %</div>
<svg class="r" style="left:502.3px;top:18px" width="4" height="4" viewBox="0 0 8 8"><rect x="2.5" y="0.5" width="5" height="5" fill="none" stroke="#444" stroke-width="1"/><rect x="0.5" y="2.5" width="5" height="5" fill="#555"/></svg>
<div class="r" style="left:95.7px;top:49.6px;width:435.3px;height:2.3999999999999986px;background:linear-gradient(to bottom,#f0f0f0,#e2d2e4);"></div>
<div class="r" style="left:95.9px;top:51.8px;width:5.699999999999989px;height:266.7px;background:linear-gradient(to bottom,#c8a8a8 0%,#ff0000 4.5%,#ff0000 14.5%,#ff8000 20.5%,#ffe000 27.6%,#c0ff00 34%,#00ff00 38.5%,#00e000 48%,#00a000 55.5%,#00a0a0 60.5%,#20a0e0 69%,#0000ff 77.5%,#2000a0 83.5%,#8000a0 88%,#500050 93%,#000000 100%);"></div>
<div class="r" style="left:102px;top:52px;width:429px;height:267px;background:linear-gradient(to right,rgba(0,0,30,0.05) 0%,rgba(0,0,0,0) 20%,rgba(0,0,0,0) 100%),linear-gradient(to bottom,#6c007a 0%,#800090 2%,#800090 62%,#7a008a 75%,#700080 86%,#580068 100%);"></div>
<div class="r" style="left:219px;top:95px;width:180px;height:180px;border-radius:50%;background:radial-gradient(circle 90px at 90px 90px,#ff0000 0px,#f80000 16px,#ff8000 21px,#ffe000 26px,#c0f000 31px,#00ff00 36px,#00a800 44px,#00a0a0 49px,#10a0d0 53px,#1080e0 59px,#0000d8 65px,#1000b0 70px,#3a009a 75px,rgba(128,0,144,0) 80px,rgba(128,0,144,0) 90px)"></div>
<div class="r" style="left:308.6px;top:52px;width:0.6999999999999886px;height:267px;background:rgba(240,150,150,0.7);"></div>
<div class="r" style="left:102px;top:184.7px;width:429px;height:0.700000000000017px;background:rgba(240,150,150,0.7);"></div>
<div class="r" style="left:531px;top:51.6px;width:72.60000000000002px;height:267.0px;background:#000;"></div>
<div class="r" style="left:102px;top:319px;width:429px;height:67px;background:#000;"></div>
<div class="r" style="left:102px;top:318.6px;width:429px;height:0.6999999999999886px;background:#b89ab8;"></div>
<svg class="r" style="left:0;top:0" width="700" height="422" viewBox="0 0 700 422"><polyline points="596.95,51.60 597.07,52.60 597.00,53.60 597.09,54.60 597.09,55.60 596.86,56.60 596.83,57.60 597.15,58.60 596.91,59.60 596.89,60.60 597.18,61.60 596.96,62.60 597.09,63.60 596.93,64.60 596.98,65.60 596.77,66.60 596.94,67.60 597.02,68.60 596.85,69.60 596.92,70.60 596.86,71.60 596.58,72.60 596.84,73.60 596.73,74.60 596.58,75.60 596.42,76.60 596.72,77.60 596.51,78.60 596.56,79.60 596.57,80.60 596.44,81.60 596.46,82.60 596.17,83.60 596.27,84.60 596.03,85.60 596.16,86.60 596.04,87.60 595.60,88.60 595.51,89.60 595.42,90.60 595.63,91.60 595.26,92.60 595.21,93.60 594.91,94.60 594.84,95.60 594.61,96.60 594.41,97.60 594.33,98.60 594.12,99.60 594.06,100.60 593.72,101.60 593.60,102.60 593.31,103.60 593.10,104.60 592.65,105.60 592.08,106.60 592.13,107.60 591.85,108.60 591.46,109.60 590.90,110.60 590.59,111.60 589.88,112.60 589.82,113.60 589.21,114.60 588.56,115.60 587.92,116.60 587.90,117.60 587.46,118.60 586.29,119.60 586.19,120.60 585.31,121.60 584.49,122.60 583.93,123.60 583.60,124.60 582.98,125.60 581.60,126.60 581.30,127.60 580.05,128.60 579.81,129.60 578.64,130.60 578.28,131.60 577.50,132.60 576.17,133.60 575.72,134.60 574.11,135.60 572.90,136.60 572.44,137.60 570.84,138.60 569.98,139.60 569.16,140.60 568.32,141.60 566.72,142.60 565.49,143.60 565.37,144.60 563.57,145.60 563.26,146.60 562.06,147.60 560.24,148.60 559.20,149.60 558.13,150.60 557.15,151.60 555.93,152.60 554.74,153.60 553.68,154.60 553.04,155.60 551.25,156.60 550.02,157.60 549.38,158.60 547.52,159.60 546.55,160.60 546.63,161.60 544.84,162.60 543.89,163.60 541.98,164.60 541.75,165.60 541.13,166.60 539.24,167.60 539.48,168.60 538.71,169.60 536.89,170.60 537.22,171.60 536.24,172.60 536.02,173.60 534.80,174.60 534.95,175.60 534.52,176.60 532.68,177.60 532.36,178.60 533.24,179.60 533.53,180.60 531.88,181.60 532.11,182.60 532.26,183.60 531.65,184.60 531.73,185.60 531.67,186.60 531.88,187.60 532.49,188.60 532.11,189.60 532.53,190.60 533.62,191.60 532.52,192.60 534.01,193.60 534.80,194.60 534.50,195.60 534.90,196.60 536.63,197.60 536.21,198.60 536.83,199.60 538.04,200.60 539.31,201.60 539.05,202.60 540.31,203.60 541.23,204.60 543.04,205.60 543.31,206.60 545.01,207.60 544.86,208.60 546.18,209.60 547.76,210.60 549.21,211.60 549.61,212.60 550.37,213.60 551.34,214.60 553.09,215.60 553.74,216.60 555.78,217.60 556.97,218.60 557.20,219.60 558.49,220.60 560.35,221.60 561.27,222.60 562.62,223.60 563.16,224.60 564.02,225.60 565.34,226.60 567.03,227.60 567.51,228.60 568.67,229.60 569.80,230.60 570.84,231.60 571.84,232.60 573.36,233.60 573.57,234.60 574.38,235.60 576.21,236.60 577.06,237.60 578.03,238.60 578.39,239.60 579.68,240.60 580.46,241.60 580.67,242.60 581.86,243.60 582.67,244.60 583.24,245.60 583.83,246.60 584.33,247.60 585.01,248.60 585.55,249.60 586.04,250.60 586.97,251.60 587.32,252.60 588.19,253.60 588.21,254.60 589.23,255.60 589.56,256.60 590.13,257.60 590.53,258.60 590.93,259.60 591.13,260.60 591.19,261.60 591.93,262.60 591.96,263.60 592.34,264.60 592.82,265.60 593.03,266.60 593.24,267.60 593.75,268.60 593.83,269.60 593.92,270.60 594.09,271.60 594.58,272.60 594.58,273.60 594.90,274.60 594.87,275.60 594.95,276.60 595.25,277.60 595.51,278.60 595.36,279.60 595.75,280.60 595.92,281.60 595.97,282.60 596.07,283.60 595.81,284.60 596.16,285.60 596.34,286.60 596.07,287.60 596.23,288.60 596.29,289.60 596.46,290.60 596.47,291.60 596.54,292.60 596.71,293.60 596.44,294.60 596.50,295.60 596.56,296.60 596.60,297.60 596.60,298.60 597.00,299.60 596.98,300.60 596.69,301.60 596.88,302.60 596.83,303.60 596.84,304.60 596.88,305.60 597.01,306.60 597.00,307.60 596.92,308.60 596.87,309.60 596.93,310.60 596.86,311.60 597.04,312.60 597.11,313.60 596.99,314.60 596.87,315.60 596.92,316.60 597.00,317.60 597.10,318.60" fill="none" stroke="#c08020" stroke-width="0.6"/><polyline points="599.55,51.60 599.55,52.60 599.54,53.60 599.54,54.60 599.53,55.60 599.52,56.60 599.51,57.60 599.50,58.60 599.49,59.60 599.48,60.60 599.47,61.60 599.46,62.60 599.44,63.60 599.42,64.60 599.40,65.60 599.39,66.60 599.36,67.60 599.34,68.60 599.31,69.60 599.29,70.60 599.25,71.60 599.22,72.60 599.18,73.60 599.15,74.60 599.10,75.60 599.06,76.60 599.01,77.60 598.95,78.60 598.89,79.60 598.83,80.60 598.76,81.60 598.69,82.60 598.61,83.60 598.52,84.60 598.43,85.60 598.33,86.60 598.23,87.60 598.11,88.60 597.99,89.60 597.86,90.60 597.72,91.60 597.57,92.60 597.42,93.60 597.25,94.60 597.07,95.60 596.88,96.60 596.67,97.60 596.46,98.60 596.23,99.60 595.98,100.60 595.73,101.60 595.45,102.60 595.17,103.60 594.86,104.60 594.54,105.60 594.20,106.60 593.85,107.60 593.47,108.60 593.08,109.60 592.67,110.60 592.24,111.60 591.78,112.60 591.31,113.60 590.81,114.60 590.29,115.60 589.75,116.60 589.19,117.60 588.60,118.60 587.99,119.60 587.36,120.60 586.70,121.60 586.01,122.60 585.31,123.60 584.57,124.60 583.82,125.60 583.04,126.60 582.23,127.60 581.40,128.60 580.55,129.60 579.67,130.60 578.77,131.60 577.84,132.60 576.89,133.60 575.92,134.60 574.93,135.60 573.92,136.60 572.89,137.60 571.84,138.60 570.78,139.60 569.69,140.60 568.60,141.60 567.48,142.60 566.36,143.60 565.22,144.60 564.07,145.60 562.92,146.60 561.76,147.60 560.59,148.60 559.42,149.60 558.25,150.60 557.08,151.60 555.91,152.60 554.74,153.60 553.59,154.60 552.44,155.60 551.30,156.60 550.18,157.60 549.07,158.60 547.97,159.60 546.90,160.60 545.85,161.60 544.82,162.60 543.82,163.60 542.85,164.60 541.90,165.60 540.99,166.60 540.11,167.60 539.27,168.60 538.47,169.60 537.71,170.60 536.99,171.60 536.31,172.60 535.67,173.60 535.09,174.60 534.55,175.60 534.06,176.60 533.62,177.60 533.23,178.60 532.89,179.60 532.61,180.60 532.38,181.60 532.20,182.60 532.08,183.60 532.01,184.60 532.00,185.60 532.05,186.60 532.15,187.60 532.30,188.60 532.51,189.60 532.77,190.60 533.09,191.60 533.45,192.60 533.87,193.60 534.34,194.60 534.86,195.60 535.43,196.60 536.05,197.60 536.71,198.60 537.41,199.60 538.16,200.60 538.95,201.60 539.77,202.60 540.64,203.60 541.53,204.60 542.47,205.60 543.43,206.60 544.42,207.60 545.44,208.60 546.48,209.60 547.54,210.60 548.63,211.60 549.73,212.60 550.85,213.60 551.98,214.60 553.13,215.60 554.28,216.60 555.44,217.60 556.61,218.60 557.78,219.60 558.95,220.60 560.12,221.60 561.29,222.60 562.45,223.60 563.61,224.60 564.76,225.60 565.90,226.60 567.03,227.60 568.15,228.60 569.26,229.60 570.35,230.60 571.42,231.60 572.48,232.60 573.51,233.60 574.53,234.60 575.53,235.60 576.51,236.60 577.46,237.60 578.40,238.60 579.31,239.60 580.20,240.60 581.06,241.60 581.90,242.60 582.72,243.60 583.51,244.60 584.27,245.60 585.02,246.60 585.73,247.60 586.43,248.60 587.10,249.60 587.74,250.60 588.36,251.60 588.96,252.60 589.53,253.60 590.08,254.60 590.61,255.60 591.11,256.60 591.60,257.60 592.06,258.60 592.50,259.60 592.92,260.60 593.32,261.60 593.70,262.60 594.06,263.60 594.41,264.60 594.74,265.60 595.05,266.60 595.34,267.60 595.62,268.60 595.88,269.60 596.13,270.60 596.37,271.60 596.59,272.60 596.80,273.60 596.99,274.60 597.18,275.60 597.35,276.60 597.51,277.60 597.66,278.60 597.81,279.60 597.94,280.60 598.07,281.60 598.18,282.60 598.29,283.60 598.39,284.60 598.49,285.60 598.57,286.60 598.66,287.60 598.73,288.60 598.80,289.60 598.87,290.60 598.93,291.60 598.98,292.60 599.04,293.60 599.08,294.60 599.13,295.60 599.17,296.60 599.21,297.60 599.24,298.60 599.27,299.60 599.30,300.60 599.33,301.60 599.35,302.60 599.38,303.60 599.40,304.60 599.42,305.60 599.43,306.60 599.45,307.60 599.46,308.60 599.48,309.60 599.49,310.60 599.50,311.60 599.51,312.60 599.52,313.60 599.53,314.60 599.53,315.60 599.54,316.60 599.55,317.60 599.55,318.60" fill="none" stroke="#d8c870" stroke-width="0.55"/><polyline points="102.50,381.49 103.50,381.36 104.50,381.50 105.50,381.44 106.50,381.38 107.50,381.36 108.50,381.40 109.50,381.46 110.50,381.37 111.50,381.46 112.50,381.39 113.50,381.32 114.50,381.41 115.50,381.46 116.50,381.26 117.50,381.38 118.50,381.38 119.50,381.52 120.50,381.54 121.50,381.36 122.50,381.53 123.50,381.49 124.50,381.32 125.50,381.39 126.50,381.28 127.50,381.50 128.50,381.45 129.50,381.52 130.50,381.49 131.50,381.45 132.50,381.47 133.50,381.42 134.50,381.27 135.50,381.43 136.50,381.24 137.50,381.28 138.50,381.49 139.50,381.25 140.50,381.27 141.50,381.27 142.50,381.52 143.50,381.29 144.50,381.24 145.50,381.50 146.50,381.27 147.50,381.50 148.50,381.45 149.50,381.50 150.50,381.53 151.50,381.41 152.50,381.48 153.50,381.24 154.50,381.47 155.50,381.39 156.50,381.45 157.50,381.25 158.50,381.46 159.50,381.51 160.50,381.23 161.50,381.31 162.50,381.38 163.50,381.46 164.50,381.27 165.50,381.25 166.50,381.26 167.50,381.38 168.50,381.42 169.50,381.29 170.50,381.28 171.50,381.28 172.50,381.25 173.50,381.27 174.50,381.15 175.50,381.27 176.50,381.41 177.50,381.22 178.50,381.31 179.50,381.10 180.50,381.26 181.50,381.26 182.50,381.21 183.50,381.14 184.50,381.11 185.50,381.13 186.50,381.19 187.50,380.91 188.50,380.86 189.50,381.04 190.50,381.06 191.50,380.89 192.50,380.82 193.50,380.87 194.50,380.64 195.50,380.61 196.50,380.53 197.50,380.60 198.50,380.44 199.50,380.34 200.50,380.42 201.50,380.43 202.50,380.11 203.50,380.17 204.50,379.97 205.50,380.02 206.50,379.81 207.50,379.58 208.50,379.43 209.50,379.23 210.50,379.25 211.50,379.07 212.50,378.83 213.50,378.73 214.50,378.54 215.50,378.53 216.50,378.08 217.50,378.22 218.50,377.79 219.50,377.60 220.50,377.31 221.50,377.21 222.50,376.94 223.50,376.54 224.50,376.21 225.50,376.01 226.50,375.75 227.50,375.20 228.50,375.01 229.50,374.75 230.50,374.12 231.50,373.59 232.50,373.17 233.50,373.00 234.50,372.52 235.50,372.22 236.50,371.67 237.50,370.81 238.50,370.25 239.50,369.74 240.50,369.13 241.50,368.88 242.50,368.39 243.50,367.81 244.50,366.73 245.50,366.50 246.50,365.43 247.50,364.82 248.50,364.34 249.50,363.11 250.50,362.36 251.50,362.20 252.50,360.97 253.50,360.22 254.50,359.60 255.50,358.86 256.50,357.39 257.50,356.84 258.50,356.06 259.50,355.22 260.50,354.04 261.50,353.52 262.50,353.00 263.50,351.45 264.50,350.68 265.50,349.25 266.50,348.47 267.50,347.97 268.50,346.33 269.50,346.33 270.50,345.40 271.50,343.38 272.50,343.53 273.50,341.80 274.50,341.39 275.50,340.42 276.50,338.81 277.50,338.42 278.50,337.46 279.50,336.77 280.50,335.04 281.50,334.90 282.50,334.36 283.50,333.04 284.50,331.98 285.50,330.47 286.50,330.29 287.50,329.27 288.50,329.14 289.50,328.35 290.50,327.46 291.50,326.11 292.50,326.29 293.50,325.66 294.50,324.27 295.50,325.02 296.50,324.08 297.50,322.63 298.50,323.69 299.50,321.82 300.50,321.81 301.50,322.23 302.50,321.71 303.50,321.39 304.50,321.37 305.50,320.85 306.50,320.45 307.50,320.11 308.50,319.87 309.50,321.12 310.50,321.25 311.50,320.94 312.50,321.45 313.50,320.89 314.50,320.93 315.50,321.42 316.50,322.64 317.50,321.41 318.50,322.65 319.50,322.59 320.50,324.01 321.50,323.73 322.50,324.22 323.50,324.90 324.50,325.74 325.50,326.77 326.50,326.68 327.50,328.22 328.50,327.67 329.50,328.68 330.50,329.16 331.50,329.98 332.50,331.89 333.50,332.63 334.50,332.61 335.50,333.49 336.50,334.73 337.50,336.13 338.50,337.15 339.50,337.97 340.50,338.67 341.50,338.98 342.50,340.29 343.50,340.97 344.50,342.40 345.50,343.42 346.50,343.91 347.50,344.94 348.50,346.58 349.50,346.62 350.50,348.52 351.50,349.57 352.50,350.58 353.50,350.88 354.50,352.01 355.50,352.96 356.50,353.93 357.50,355.19 358.50,355.78 359.50,356.28 360.50,357.69 361.50,358.18 362.50,359.13 363.50,360.06 364.50,360.24 365.50,361.69 366.50,362.37 367.50,362.98 368.50,363.75 369.50,364.42 370.50,364.93 371.50,365.86 372.50,366.18 373.50,367.15 374.50,367.88 375.50,368.36 376.50,369.03 377.50,369.85 378.50,370.35 379.50,370.43 380.50,371.34 381.50,371.73 382.50,371.89 383.50,372.53 384.50,372.91 385.50,373.26 386.50,373.92 387.50,374.51 388.50,374.58 389.50,375.22 390.50,375.48 391.50,375.54 392.50,376.20 393.50,376.38 394.50,376.82 395.50,377.00 396.50,377.27 397.50,377.35 398.50,377.79 399.50,378.06 400.50,378.25 401.50,378.28 402.50,378.60 403.50,378.67 404.50,378.70 405.50,378.84 406.50,379.01 407.50,379.21 408.50,379.33 409.50,379.59 410.50,379.78 411.50,379.84 412.50,379.91 413.50,380.09 414.50,380.06 415.50,380.21 416.50,380.40 417.50,380.35 418.50,380.35 419.50,380.67 420.50,380.67 421.50,380.61 422.50,380.67 423.50,380.77 424.50,380.84 425.50,380.76 426.50,380.73 427.50,380.84 428.50,381.07 429.50,380.89 430.50,381.03 431.50,380.97 432.50,381.00 433.50,381.01 434.50,381.11 435.50,381.06 436.50,381.03 437.50,381.08 438.50,381.11 439.50,381.23 440.50,381.11 441.50,381.11 442.50,381.26 443.50,381.26 444.50,381.36 445.50,381.16 446.50,381.28 447.50,381.29 448.50,381.18 449.50,381.49 450.50,381.25 451.50,381.22 452.50,381.34 453.50,381.25 454.50,381.40 455.50,381.32 456.50,381.25 457.50,381.23 458.50,381.45 459.50,381.30 460.50,381.47 461.50,381.37 462.50,381.52 463.50,381.32 464.50,381.31 465.50,381.31 466.50,381.49 467.50,381.43 468.50,381.34 469.50,381.26 470.50,381.45 471.50,381.54 472.50,381.42 473.50,381.24 474.50,381.25 475.50,381.26 476.50,381.29 477.50,381.25 478.50,381.25 479.50,381.45 480.50,381.53 481.50,381.30 482.50,381.55 483.50,381.39 484.50,381.50 485.50,381.53 486.50,381.54 487.50,381.25 488.50,381.34 489.50,381.43 490.50,381.54 491.50,381.27 492.50,381.33 493.50,381.51 494.50,381.28 495.50,381.36 496.50,381.35 497.50,381.46 498.50,381.54 499.50,381.30 500.50,381.48 501.50,381.47 502.50,381.51 503.50,381.42 504.50,381.54 505.50,381.36 506.50,381.37 507.50,381.31 508.50,381.49 509.50,381.39 510.50,381.33 511.50,381.29 512.50,381.47 513.50,381.43 514.50,381.47 515.50,381.36 516.50,381.40 517.50,381.29 518.50,381.47 519.50,381.25 520.50,381.39 521.50,381.48 522.50,381.46 523.50,381.27 524.50,381.32 525.50,381.51 526.50,381.45 527.50,381.52 528.50,381.52 529.50,381.38 530.50,381.53" fill="none" stroke="#d09a30" stroke-width="0.6"/><polyline points="102.50,381.40 103.50,381.40 104.50,381.40 105.50,381.40 106.50,381.40 107.50,381.40 108.50,381.40 109.50,381.40 110.50,381.40 111.50,381.40 112.50,381.40 113.50,381.40 114.50,381.40 115.50,381.40 116.50,381.40 117.50,381.40 118.50,381.40 119.50,381.40 120.50,381.40 121.50,381.40 122.50,381.40 123.50,381.40 124.50,381.40 125.50,381.40 126.50,381.40 127.50,381.40 128.50,381.40 129.50,381.40 130.50,381.40 131.50,381.40 132.50,381.40 133.50,381.40 134.50,381.40 135.50,381.40 136.50,381.40 137.50,381.40 138.50,381.40 139.50,381.40 140.50,381.40 141.50,381.40 142.50,381.40 143.50,381.40 144.50,381.39 145.50,381.39 146.50,381.39 147.50,381.39 148.50,381.39 149.50,381.39 150.50,381.39 151.50,381.39 152.50,381.39 153.50,381.39 154.50,381.38 155.50,381.38 156.50,381.38 157.50,381.38 158.50,381.38 159.50,381.37 160.50,381.37 161.50,381.37 162.50,381.36 163.50,381.36 164.50,381.36 165.50,381.35 166.50,381.35 167.50,381.34 168.50,381.33 169.50,381.33 170.50,381.32 171.50,381.31 172.50,381.30 173.50,381.29 174.50,381.28 175.50,381.27 176.50,381.26 177.50,381.24 178.50,381.23 179.50,381.21 180.50,381.20 181.50,381.18 182.50,381.16 183.50,381.14 184.50,381.11 185.50,381.09 186.50,381.06 187.50,381.03 188.50,381.00 189.50,380.96 190.50,380.92 191.50,380.88 192.50,380.84 193.50,380.79 194.50,380.74 195.50,380.69 196.50,380.63 197.50,380.57 198.50,380.50 199.50,380.43 200.50,380.35 201.50,380.27 202.50,380.19 203.50,380.09 204.50,380.00 205.50,379.89 206.50,379.78 207.50,379.66 208.50,379.54 209.50,379.40 210.50,379.26 211.50,379.11 212.50,378.95 213.50,378.79 214.50,378.61 215.50,378.42 216.50,378.22 217.50,378.01 218.50,377.79 219.50,377.56 220.50,377.32 221.50,377.06 222.50,376.80 223.50,376.51 224.50,376.22 225.50,375.91 226.50,375.58 227.50,375.24 228.50,374.89 229.50,374.52 230.50,374.14 231.50,373.73 232.50,373.31 233.50,372.88 234.50,372.43 235.50,371.95 236.50,371.47 237.50,370.96 238.50,370.44 239.50,369.89 240.50,369.33 241.50,368.75 242.50,368.15 243.50,367.53 244.50,366.90 245.50,366.24 246.50,365.57 247.50,364.88 248.50,364.17 249.50,363.44 250.50,362.69 251.50,361.93 252.50,361.14 253.50,360.35 254.50,359.53 255.50,358.70 256.50,357.86 257.50,357.00 258.50,356.12 259.50,355.24 260.50,354.34 261.50,353.43 262.50,352.50 263.50,351.57 264.50,350.63 265.50,349.69 266.50,348.73 267.50,347.77 268.50,346.81 269.50,345.84 270.50,344.87 271.50,343.91 272.50,342.94 273.50,341.97 274.50,341.01 275.50,340.05 276.50,339.10 277.50,338.16 278.50,337.23 279.50,336.31 280.50,335.40 281.50,334.51 282.50,333.63 283.50,332.77 284.50,331.92 285.50,331.10 286.50,330.30 287.50,329.52 288.50,328.77 289.50,328.05 290.50,327.35 291.50,326.68 292.50,326.04 293.50,325.43 294.50,324.85 295.50,324.31 296.50,323.80 297.50,323.33 298.50,322.89 299.50,322.49 300.50,322.13 301.50,321.81 302.50,321.53 303.50,321.29 304.50,321.09 305.50,320.93 306.50,320.81 307.50,320.74 308.50,320.70 309.50,320.71 310.50,320.76 311.50,320.85 312.50,320.99 313.50,321.16 314.50,321.38 315.50,321.64 316.50,321.93 317.50,322.27 318.50,322.65 319.50,323.06 320.50,323.51 321.50,324.00 322.50,324.52 323.50,325.08 324.50,325.67 325.50,326.29 326.50,326.94 327.50,327.62 328.50,328.33 329.50,329.07 330.50,329.83 331.50,330.62 332.50,331.43 333.50,332.26 334.50,333.11 335.50,333.98 336.50,334.86 337.50,335.76 338.50,336.68 339.50,337.60 340.50,338.54 341.50,339.48 342.50,340.44 343.50,341.39 344.50,342.36 345.50,343.32 346.50,344.29 347.50,345.26 348.50,346.23 349.50,347.20 350.50,348.16 351.50,349.11 352.50,350.07 353.50,351.01 354.50,351.95 355.50,352.87 356.50,353.79 357.50,354.70 358.50,355.59 359.50,356.47 360.50,357.34 361.50,358.20 362.50,359.04 363.50,359.86 364.50,360.67 365.50,361.46 366.50,362.23 367.50,362.99 368.50,363.73 369.50,364.45 370.50,365.16 371.50,365.84 372.50,366.51 373.50,367.15 374.50,367.78 375.50,368.39 376.50,368.98 377.50,369.56 378.50,370.11 379.50,370.65 380.50,371.16 381.50,371.66 382.50,372.14 383.50,372.61 384.50,373.05 385.50,373.48 386.50,373.90 387.50,374.29 388.50,374.67 389.50,375.03 390.50,375.38 391.50,375.72 392.50,376.03 393.50,376.34 394.50,376.63 395.50,376.90 396.50,377.17 397.50,377.42 398.50,377.66 399.50,377.88 400.50,378.10 401.50,378.30 402.50,378.50 403.50,378.68 404.50,378.85 405.50,379.02 406.50,379.17 407.50,379.32 408.50,379.46 409.50,379.59 410.50,379.71 411.50,379.83 412.50,379.93 413.50,380.04 414.50,380.13 415.50,380.22 416.50,380.31 417.50,380.39 418.50,380.46 419.50,380.53 420.50,380.59 421.50,380.65 422.50,380.71 423.50,380.76 424.50,380.81 425.50,380.86 426.50,380.90 427.50,380.94 428.50,380.97 429.50,381.01 430.50,381.04 431.50,381.07 432.50,381.10 433.50,381.12 434.50,381.14 435.50,381.17 436.50,381.19 437.50,381.20 438.50,381.22 439.50,381.24 440.50,381.25 441.50,381.26 442.50,381.28 443.50,381.29 444.50,381.30 445.50,381.31 446.50,381.31 447.50,381.32 448.50,381.33 449.50,381.34 450.50,381.34 451.50,381.35 452.50,381.35 453.50,381.36 454.50,381.36 455.50,381.36 456.50,381.37 457.50,381.37 458.50,381.37 459.50,381.38 460.50,381.38 461.50,381.38 462.50,381.38 463.50,381.38 464.50,381.39 465.50,381.39 466.50,381.39 467.50,381.39 468.50,381.39 469.50,381.39 470.50,381.39 471.50,381.39 472.50,381.39 473.50,381.39 474.50,381.40 475.50,381.40 476.50,381.40 477.50,381.40 478.50,381.40 479.50,381.40 480.50,381.40 481.50,381.40 482.50,381.40 483.50,381.40 484.50,381.40 485.50,381.40 486.50,381.40 487.50,381.40 488.50,381.40 489.50,381.40 490.50,381.40 491.50,381.40 492.50,381.40 493.50,381.40 494.50,381.40 495.50,381.40 496.50,381.40 497.50,381.40 498.50,381.40 499.50,381.40 500.50,381.40 501.50,381.40 502.50,381.40 503.50,381.40 504.50,381.40 505.50,381.40 506.50,381.40 507.50,381.40 508.50,381.40 509.50,381.40 510.50,381.40 511.50,381.40 512.50,381.40 513.50,381.40 514.50,381.40 515.50,381.40 516.50,381.40 517.50,381.40 518.50,381.40 519.50,381.40 520.50,381.40 521.50,381.40 522.50,381.40 523.50,381.40 524.50,381.40 525.50,381.40 526.50,381.40 527.50,381.40 528.50,381.40 529.50,381.40 530.50,381.40" fill="none" stroke="#f0dc90" stroke-width="0.6"/><path d="M531 185 L535 185 M309 319.5 L309 323" stroke="rgba(240,150,150,0.8)" stroke-width="0.7"/></svg>
<div class="r" style="left:509px;top:16.3px;width:94.39999999999998px;height:7.399999999999999px;background:#d9d9d9;"></div>
<div class="t" style="left:510.20px;transform-origin:0 50%;top:17.89px;font-size:4.62px;line-height:6.01px;color:#222;transform:scaleX(0.800);">Remote Control</div>
<svg class="r" style="left:598.4px;top:18.0px" width="4" height="4" viewBox="0 0 8 8"><rect x="2.5" y="0.5" width="5" height="5" fill="none" stroke="#444" stroke-width="1"/><rect x="0.5" y="2.5" width="5" height="5" fill="#555"/></svg>
<div class="r" style="left:509px;top:23.7px;width:94.39999999999998px;height:27.8px;background:#f0f0f0;"></div>
<div class="r" style="left:509.5px;top:24.5px;width:93.0px;height:24.5px;background:#f0f0f0;box-shadow:inset 0 0 0 0.6px #dadada;"></div>
<div class="t" style="left:512.00px;transform-origin:0 50%;top:28.77px;font-size:4.81px;line-height:6.26px;color:#111;transform:scaleX(0.800);">IP:</div>
<div class="r" style="left:519.5px;top:27.5px;width:33.5px;height:6.5px;background:#ffffff;box-shadow:inset 0 0 0 0.6px #a0a0a0;"></div>
<div class="t" style="left:521.30px;transform-origin:0 50%;top:28.52px;font-size:4.81px;line-height:6.26px;color:#000;transform:scaleX(0.800);">127.0.0.1</div>
<div class="t" style="left:556.00px;transform-origin:0 50%;top:28.77px;font-size:4.81px;line-height:6.26px;color:#111;transform:scaleX(0.800);">ID:</div>
<div class="r" style="left:563px;top:27.5px;width:37.5px;height:6.5px;background:#ffffff;box-shadow:inset 0 0 0 0.6px #a0a0a0;"></div>
<div class="t" style="left:564.80px;transform-origin:0 50%;top:28.52px;font-size:4.81px;line-height:6.26px;color:#000;transform:scaleX(0.800);">Working Station 1</div>
<div class="t" style="left:512.00px;transform-origin:0 50%;top:39.57px;font-size:4.81px;line-height:6.26px;color:#111;transform:scaleX(0.800);">Port:</div>
<div class="r" style="left:523px;top:38px;width:18.5px;height:7px;background:#ffffff;box-shadow:inset 0 0 0 0.6px #a0a0a0;"></div>
<div class="t" style="right:164.10px;transform-origin:100% 50%;top:39.27px;font-size:4.81px;line-height:6.26px;color:#000;transform:scaleX(0.800);"></div>
<svg class="r" style="left:0;top:0" width="1" height="1" viewBox="0 0 1 1"><rect x="537.20" y="38.60" width="3.7" height="5.80" fill="#f4f4f4" stroke="#c8c8c8" stroke-width="0.4"/><path d="M538.20 41.00 L540.20 41.00 L539.20 39.70 Z M538.20 42.00 L540.20 42.00 L539.20 43.30 Z" fill="#222"/></svg>
<div class="t" style="left:524.50px;transform-origin:0 50%;top:39.27px;font-size:4.81px;line-height:6.26px;color:#111;transform:scaleX(0.800);">6008</div>
<div class="r" style="left:544.5px;top:37.5px;width:26.0px;height:8.0px;background:#e1e1e1;box-shadow:inset 0 0 0 0.6px #adadad;"></div>
<div class="t" style="left:507.50px;width:100px;text-align:center;transform-origin:50% 50%;top:39.27px;font-size:4.81px;line-height:6.26px;color:#111;transform:scaleX(0.800);">Connect</div>
<svg class="r" style="left:573px;top:39.5px" width="4.7" height="4.7" viewBox="0 0 10 10"><rect x="0.6" y="0.6" width="8.8" height="8.8" fill="#fff" stroke="#333" stroke-width="1.5"/></svg>
<div class="t" style="left:580.00px;transform-origin:0 50%;top:39.57px;font-size:4.81px;line-height:6.26px;color:#111;transform:scaleX(0.800);">Reconnect</div>
<div class="r" style="left:605px;top:16.3px;width:95px;height:7.199999999999999px;background:#d9d9d9;"></div>
<div class="t" style="left:606.20px;transform-origin:0 50%;top:17.79px;font-size:4.62px;line-height:6.01px;color:#222;transform:scaleX(0.800);">User Profiles</div>
<svg class="r" style="left:695px;top:17.9px" width="4" height="4" viewBox="0 0 8 8"><rect x="2.5" y="0.5" width="5" height="5" fill="none" stroke="#444" stroke-width="1"/><rect x="0.5" y="2.5" width="5" height="5" fill="#555"/></svg>
<div class="r" style="left:605px;top:23.5px;width:95px;height:25.5px;background:#f0f0f0;"></div>
<div class="r" style="left:606px;top:24.5px;width:93px;height:23.9px;background:#f0f0f0;box-shadow:inset 0 0 0 0.6px #dadada;"></div>
<div class="r" style="left:608.3px;top:26px;width:42.40000000000009px;height:9.5px;background:#e1e1e1;box-shadow:inset 0 0 0 0.6px #adadad;"></div>
<div class="t" style="left:579.50px;width:100px;text-align:center;transform-origin:50% 50%;top:28.52px;font-size:4.81px;line-height:6.26px;color:#111;transform:scaleX(0.800);">Experiment SetUp</div>
<div class="r" style="left:653px;top:26px;width:43.5px;height:9.5px;background:#e1e1e1;box-shadow:inset 0 0 0 0.6px #adadad;"></div>
<div class="t" style="left:624.75px;width:100px;text-align:center;transform-origin:50% 50%;top:28.52px;font-size:4.81px;line-height:6.26px;color:#111;transform:scaleX(0.800);">Beam Profiling</div>
<div class="r" style="left:608.3px;top:38px;width:42.40000000000009px;height:9px;background:#e1e1e1;box-shadow:inset 0 0 0 0.6px #adadad;"></div>
<div class="t" style="left:579.50px;width:100px;text-align:center;transform-origin:50% 50%;top:40.27px;font-size:4.81px;line-height:6.26px;color:#111;transform:scaleX(0.800);">VCXU-23M Settings</div>
<div class="r" style="left:653px;top:38px;width:43.5px;height:9px;background:#e1e1e1;box-shadow:inset 0 0 0 0.6px #adadad;"></div>
<div class="t" style="left:624.75px;width:100px;text-align:center;transform-origin:50% 50%;top:40.27px;font-size:4.81px;line-height:6.26px;color:#111;transform:scaleX(0.800);">Remote Control</div>
<div class="r" style="left:605px;top:51.3px;width:95px;height:7.100000000000001px;background:#d9d9d9;"></div>
<div class="t" style="left:606.20px;transform-origin:0 50%;top:52.74px;font-size:4.62px;line-height:6.01px;color:#222;transform:scaleX(0.800);">Tool Table</div>
<svg class="r" style="left:695px;top:52.849999999999994px" width="4" height="4" viewBox="0 0 8 8"><rect x="2.5" y="0.5" width="5" height="5" fill="none" stroke="#444" stroke-width="1"/><rect x="0.5" y="2.5" width="5" height="5" fill="#555"/></svg>
<div class="r" style="left:605px;top:58.4px;width:95px;height:354.6px;background:#f0f0f0;border-bottom:0.8px solid #c8c8c8;border-left:0.8px solid #dcdcdc"></div>
<div class="r" style="left:606px;top:59.5px;width:93px;height:352.5px;background:#f0f0f0;box-shadow:inset 0 0 0 0.6px #dadada;"></div>
<div class="t" style="left:607.80px;transform-origin:0 50%;top:61.64px;font-size:7.02px;line-height:9.13px;color:#111;font-weight:bold;transform:scaleX(0.926);">Tool Results</div>
<div class="r" style="left:647px;top:66px;width:51px;height:0.5999999999999943px;background:#d0d0d0;"></div>
<div class="r" style="left:607.5px;top:71.5px;width:90.0px;height:10.0px;background:#e1e1e1;box-shadow:inset 0 0 0 0.6px #adadad;"></div>
<div class="t" style="left:602.50px;width:100px;text-align:center;transform-origin:50% 50%;top:73.74px;font-size:5.62px;line-height:7.31px;color:#111;transform:scaleX(0.800);">Show Tool Result Viewer</div>
<div class="r" style="left:607.5px;top:95.3px;width:83.0px;height:181.7px;background:#ffffff;box-shadow:inset 0 0 0 0.6px #dadada;"></div>
<div class="r" style="left:607.5px;top:87.3px;width:32.89999999999998px;height:8.5px;background:#e8e8e8;box-shadow:inset 0 0 0 0.6px #c8c8c8;"></div>
<div class="r" style="left:611.5px;top:89.8px;width:0;height:0;border-left:1.3px solid transparent;border-right:1.3px solid transparent;border-top:1.6px solid #222"></div>
<div class="t" style="left:616.00px;transform-origin:0 50%;top:88.61px;font-size:4.75px;line-height:6.17px;color:#222;transform:scaleX(0.800);">Peak Profile</div>
<div class="r" style="left:609.5px;top:98px;width:77.5px;height:179px;background:#ffffff;"></div>
<div class="t" style="left:578.00px;width:100px;text-align:center;transform-origin:50% 50%;top:99.61px;font-size:4.75px;line-height:6.17px;color:#222;transform:scaleX(0.800);">Name</div>
<div class="t" style="left:607.80px;width:100px;text-align:center;transform-origin:50% 50%;top:99.61px;font-size:4.75px;line-height:6.17px;color:#222;transform:scaleX(0.800);">Value</div>
<div class="t" style="left:628.50px;width:100px;text-align:center;transform-origin:50% 50%;top:99.61px;font-size:4.75px;line-height:6.17px;color:#222;transform:scaleX(0.800);">Unit</div>
<div class="r" style="left:0;top:0;width:700px;height:277px;overflow:hidden">
<div class="r" style="left:609.5px;top:112.835px;width:77.5px;height:0.5999999999999943px;background:#e6e6e6;"></div>
<div class="t" style="left:611.00px;transform-origin:0 50%;top:107.15px;font-size:5.00px;line-height:6.50px;color:#222;transform:scaleX(0.800);">Pos x</div>
<div class="t" style="left:647.00px;transform-origin:0 50%;top:107.15px;font-size:5.00px;line-height:6.50px;color:#222;transform:scaleX(0.800);">465</div>
<div class="t" style="left:671.00px;transform-origin:0 50%;top:107.15px;font-size:5.00px;line-height:6.50px;color:#222;transform:scaleX(0.800);">Pixel</div>
<div class="r" style="left:609.5px;top:113.13499999999999px;width:77.5px;height:7.269999999999996px;background:#f5f5f5;"></div>
<div class="r" style="left:609.5px;top:120.10499999999999px;width:77.5px;height:0.5999999999999943px;background:#e6e6e6;"></div>
<div class="t" style="left:611.00px;transform-origin:0 50%;top:114.42px;font-size:5.00px;line-height:6.50px;color:#222;transform:scaleX(0.800);">Pos y</div>
<div class="t" style="left:647.00px;transform-origin:0 50%;top:114.42px;font-size:5.00px;line-height:6.50px;color:#222;transform:scaleX(0.800);">301</div>
<div class="t" style="left:671.00px;transform-origin:0 50%;top:114.42px;font-size:5.00px;line-height:6.50px;color:#222;transform:scaleX(0.800);">Pixel</div>
<div class="r" style="left:609.5px;top:127.37499999999999px;width:77.5px;height:0.5999999999999943px;background:#e6e6e6;"></div>
<div class="t" style="left:611.00px;transform-origin:0 50%;top:121.69px;font-size:5.00px;line-height:6.50px;color:#222;transform:scaleX(0.800);">Value</div>
<div class="t" style="left:647.00px;transform-origin:0 50%;top:121.69px;font-size:5.00px;line-height:6.50px;color:#222;transform:scaleX(0.800);">65488</div>
<div class="t" style="left:671.00px;transform-origin:0 50%;top:121.69px;font-size:5.00px;line-height:6.50px;color:#222;transform:scaleX(0.800);">a.u.</div>
<div class="r" style="left:609.5px;top:127.675px;width:77.5px;height:7.269999999999996px;background:#f5f5f5;"></div>
<div class="r" style="left:609.5px;top:134.64499999999998px;width:77.5px;height:0.5999999999999943px;background:#e6e6e6;"></div>
<div class="t" style="left:611.00px;transform-origin:0 50%;top:128.96px;font-size:5.00px;line-height:6.50px;color:#222;transform:scaleX(0.800);">Averaging</div>
<div class="t" style="left:647.00px;transform-origin:0 50%;top:128.96px;font-size:5.00px;line-height:6.50px;color:#222;transform:scaleX(0.800);">1</div>
<div class="t" style="left:671.00px;transform-origin:0 50%;top:128.96px;font-size:5.00px;line-height:6.50px;color:#222;transform:scaleX(0.800);">Pixel</div>
<div class="r" style="left:609.5px;top:141.915px;width:77.5px;height:0.5999999999999943px;background:#e6e6e6;"></div>
<div class="t" style="left:611.00px;transform-origin:0 50%;top:136.23px;font-size:5.00px;line-height:6.50px;color:#222;transform:scaleX(0.800);">Green x horiz</div>
<div class="t" style="left:647.00px;transform-origin:0 50%;top:136.23px;font-size:5.00px;line-height:6.50px;color:#222;transform:scaleX(0.800);">183</div>
<div class="t" style="left:671.00px;transform-origin:0 50%;top:136.23px;font-size:5.00px;line-height:6.50px;color:#222;transform:scaleX(0.800);">Pixel</div>
<div class="r" style="left:609.5px;top:142.215px;width:77.5px;height:7.27000000000001px;background:#f5f5f5;"></div>
<div class="r" style="left:609.5px;top:149.185px;width:77.5px;height:0.5999999999999943px;background:#e6e6e6;"></div>
<div class="t" style="left:611.00px;transform-origin:0 50%;top:143.50px;font-size:5.00px;line-height:6.50px;color:#222;transform:scaleX(0.800);">Green y horiz</div>
<div class="t" style="left:647.00px;transform-origin:0 50%;top:143.50px;font-size:5.00px;line-height:6.50px;color:#222;transform:scaleX(0.800);">4476</div>
<div class="t" style="left:671.00px;transform-origin:0 50%;top:143.50px;font-size:5.00px;line-height:6.50px;color:#222;transform:scaleX(0.800);">a.u.</div>
<div class="r" style="left:609.5px;top:156.455px;width:77.5px;height:0.5999999999999943px;background:#e6e6e6;"></div>
<div class="t" style="left:611.00px;transform-origin:0 50%;top:150.77px;font-size:5.00px;line-height:6.50px;color:#222;transform:scaleX(0.800);">Red x horiz</div>
<div class="t" style="left:647.00px;transform-origin:0 50%;top:150.77px;font-size:5.00px;line-height:6.50px;color:#222;transform:scaleX(0.800);">557</div>
<div class="t" style="left:671.00px;transform-origin:0 50%;top:150.77px;font-size:5.00px;line-height:6.50px;color:#222;transform:scaleX(0.800);">Pixel</div>
<div class="r" style="left:609.5px;top:156.755px;width:77.5px;height:7.27000000000001px;background:#f5f5f5;"></div>
<div class="r" style="left:609.5px;top:163.725px;width:77.5px;height:0.5999999999999943px;background:#e6e6e6;"></div>
<div class="t" style="left:611.00px;transform-origin:0 50%;top:158.04px;font-size:5.00px;line-height:6.50px;color:#222;transform:scaleX(0.800);">Red y horiz</div>
<div class="t" style="left:647.00px;transform-origin:0 50%;top:158.04px;font-size:5.00px;line-height:6.50px;color:#222;transform:scaleX(0.800);">6080</div>
<div class="t" style="left:671.00px;transform-origin:0 50%;top:158.04px;font-size:5.00px;line-height:6.50px;color:#222;transform:scaleX(0.800);">a.u.</div>
<div class="r" style="left:609.5px;top:170.995px;width:77.5px;height:0.5999999999999943px;background:#e6e6e6;"></div>
<div class="t" style="left:611.00px;transform-origin:0 50%;top:165.31px;font-size:5.00px;line-height:6.50px;color:#222;transform:scaleX(0.800);">Dist x horiz</div>
<div class="t" style="left:647.00px;transform-origin:0 50%;top:165.31px;font-size:5.00px;line-height:6.50px;color:#222;transform:scaleX(0.800);">463</div>
<div class="t" style="left:671.00px;transform-origin:0 50%;top:165.31px;font-size:5.00px;line-height:6.50px;color:#222;transform:scaleX(0.800);">Pixel</div>
<div class="r" style="left:609.5px;top:171.29500000000002px;width:77.5px;height:7.27000000000001px;background:#f5f5f5;"></div>
<div class="r" style="left:609.5px;top:178.26500000000001px;width:77.5px;height:0.5999999999999943px;background:#e6e6e6;"></div>
<div class="t" style="left:611.00px;transform-origin:0 50%;top:172.58px;font-size:5.00px;line-height:6.50px;color:#222;transform:scaleX(0.800);">Green x vert</div>
<div class="t" style="left:647.00px;transform-origin:0 50%;top:172.58px;font-size:5.00px;line-height:6.50px;color:#222;transform:scaleX(0.800);">75</div>
<div class="t" style="left:671.00px;transform-origin:0 50%;top:172.58px;font-size:5.00px;line-height:6.50px;color:#222;transform:scaleX(0.800);">Pixel</div>
<div class="r" style="left:609.5px;top:185.535px;width:77.5px;height:0.5999999999999943px;background:#e6e6e6;"></div>
<div class="t" style="left:611.00px;transform-origin:0 50%;top:179.85px;font-size:5.00px;line-height:6.50px;color:#222;transform:scaleX(0.800);">Green y vert</div>
<div class="t" style="left:647.00px;transform-origin:0 50%;top:179.85px;font-size:5.00px;line-height:6.50px;color:#222;transform:scaleX(0.800);">2624</div>
<div class="t" style="left:671.00px;transform-origin:0 50%;top:179.85px;font-size:5.00px;line-height:6.50px;color:#222;transform:scaleX(0.800);">a.u.</div>
<div class="r" style="left:609.5px;top:185.835px;width:77.5px;height:7.27000000000001px;background:#f5f5f5;"></div>
<div class="r" style="left:609.5px;top:192.805px;width:77.5px;height:0.5999999999999943px;background:#e6e6e6;"></div>
<div class="t" style="left:611.00px;transform-origin:0 50%;top:187.12px;font-size:5.00px;line-height:6.50px;color:#222;transform:scaleX(0.800);">Red x vert</div>
<div class="t" style="left:647.00px;transform-origin:0 50%;top:187.12px;font-size:5.00px;line-height:6.50px;color:#222;transform:scaleX(0.800);">528</div>
<div class="t" style="left:671.00px;transform-origin:0 50%;top:187.12px;font-size:5.00px;line-height:6.50px;color:#222;transform:scaleX(0.800);">Pixel</div>
<div class="r" style="left:609.5px;top:200.07500000000002px;width:77.5px;height:0.5999999999999943px;background:#e6e6e6;"></div>
<div class="t" style="left:611.00px;transform-origin:0 50%;top:194.39px;font-size:5.00px;line-height:6.50px;color:#222;transform:scaleX(0.800);">Red y vert</div>
<div class="t" style="left:647.00px;transform-origin:0 50%;top:194.39px;font-size:5.00px;line-height:6.50px;color:#222;transform:scaleX(0.800);">5760</div>
<div class="t" style="left:671.00px;transform-origin:0 50%;top:194.39px;font-size:5.00px;line-height:6.50px;color:#222;transform:scaleX(0.800);">a.u.</div>
<div class="r" style="left:609.5px;top:200.375px;width:77.5px;height:7.27000000000001px;background:#f5f5f5;"></div>
<div class="r" style="left:609.5px;top:207.345px;width:77.5px;height:0.5999999999999943px;background:#e6e6e6;"></div>
<div class="t" style="left:611.00px;transform-origin:0 50%;top:201.66px;font-size:5.00px;line-height:6.50px;color:#222;transform:scaleX(0.800);">Dist x vert</div>
<div class="t" style="left:647.00px;transform-origin:0 50%;top:201.66px;font-size:5.00px;line-height:6.50px;color:#222;transform:scaleX(0.800);">456</div>
<div class="t" style="left:671.00px;transform-origin:0 50%;top:201.66px;font-size:5.00px;line-height:6.50px;color:#222;transform:scaleX(0.800);">Pixel</div>
<div class="r" style="left:609.5px;top:214.615px;width:77.5px;height:0.5999999999999943px;background:#e6e6e6;"></div>
<div class="t" style="left:611.00px;transform-origin:0 50%;top:208.93px;font-size:5.00px;line-height:6.50px;color:#222;transform:scaleX(0.800);">ROI</div>
<div class="t" style="left:647.00px;transform-origin:0 50%;top:208.93px;font-size:5.00px;line-height:6.50px;color:#222;transform:scaleX(0.800);">Image</div>
<div class="t" style="left:671.00px;transform-origin:0 50%;top:208.93px;font-size:5.00px;line-height:6.50px;color:#222;transform:scaleX(0.800);"></div>
<div class="r" style="left:609.5px;top:214.91500000000002px;width:77.5px;height:7.27000000000001px;background:#f5f5f5;"></div>
<div class="r" style="left:609.5px;top:221.88500000000002px;width:77.5px;height:0.5999999999999943px;background:#e6e6e6;"></div>
<div class="t" style="left:611.00px;transform-origin:0 50%;top:216.20px;font-size:5.00px;line-height:6.50px;color:#222;transform:scaleX(0.800);">Peak Determina...</div>
<div class="t" style="left:647.00px;transform-origin:0 50%;top:216.20px;font-size:5.00px;line-height:6.50px;color:#222;transform:scaleX(0.800);">Calculat...</div>
<div class="t" style="left:671.00px;transform-origin:0 50%;top:216.20px;font-size:5.00px;line-height:6.50px;color:#222;transform:scaleX(0.800);">a.u.</div>
<div class="r" style="left:609.5px;top:229.155px;width:77.5px;height:0.5999999999999943px;background:#e6e6e6;"></div>
<div class="t" style="left:611.00px;transform-origin:0 50%;top:223.47px;font-size:5.00px;line-height:6.50px;color:#222;transform:scaleX(0.800);">FWHM horiz</div>
<div class="t" style="left:647.00px;transform-origin:0 50%;top:223.47px;font-size:5.00px;line-height:6.50px;color:#222;transform:scaleX(0.800);">179.6</div>
<div class="t" style="left:671.00px;transform-origin:0 50%;top:223.47px;font-size:5.00px;line-height:6.50px;color:#222;transform:scaleX(0.800);">Pixel</div>
<div class="r" style="left:609.5px;top:229.45499999999998px;width:77.5px;height:7.27000000000001px;background:#f5f5f5;"></div>
<div class="r" style="left:609.5px;top:236.42499999999998px;width:77.5px;height:0.5999999999999943px;background:#e6e6e6;"></div>
<div class="t" style="left:611.00px;transform-origin:0 50%;top:230.74px;font-size:5.00px;line-height:6.50px;color:#222;transform:scaleX(0.800);">1/e² horiz</div>
<div class="t" style="left:647.00px;transform-origin:0 50%;top:230.74px;font-size:5.00px;line-height:6.50px;color:#222;transform:scaleX(0.800);">305.1</div>
<div class="t" style="left:671.00px;transform-origin:0 50%;top:230.74px;font-size:5.00px;line-height:6.50px;color:#222;transform:scaleX(0.800);">Pixel</div>
<div class="r" style="left:609.5px;top:243.695px;width:77.5px;height:0.5999999999999943px;background:#e6e6e6;"></div>
<div class="t" style="left:611.00px;transform-origin:0 50%;top:238.01px;font-size:5.00px;line-height:6.50px;color:#222;transform:scaleX(0.800);">μ horiz</div>
<div class="t" style="left:647.00px;transform-origin:0 50%;top:238.01px;font-size:5.00px;line-height:6.50px;color:#222;transform:scaleX(0.800);">463.9</div>
<div class="t" style="left:671.00px;transform-origin:0 50%;top:238.01px;font-size:5.00px;line-height:6.50px;color:#222;transform:scaleX(0.800);">Pixel</div>
<div class="r" style="left:609.5px;top:243.995px;width:77.5px;height:7.27000000000001px;background:#f5f5f5;"></div>
<div class="r" style="left:609.5px;top:250.965px;width:77.5px;height:0.5999999999999943px;background:#e6e6e6;"></div>
<div class="t" style="left:611.00px;transform-origin:0 50%;top:245.28px;font-size:5.00px;line-height:6.50px;color:#222;transform:scaleX(0.800);">Amplitude horiz</div>
<div class="t" style="left:647.00px;transform-origin:0 50%;top:245.28px;font-size:5.00px;line-height:6.50px;color:#222;transform:scaleX(0.800);">57712.1</div>
<div class="t" style="left:671.00px;transform-origin:0 50%;top:245.28px;font-size:5.00px;line-height:6.50px;color:#222;transform:scaleX(0.800);">a.u.</div>
<div class="r" style="left:609.5px;top:258.23499999999996px;width:77.5px;height:0.6000000000000227px;background:#e6e6e6;"></div>
<div class="t" style="left:611.00px;transform-origin:0 50%;top:252.55px;font-size:5.00px;line-height:6.50px;color:#222;transform:scaleX(0.800);">Offset horiz</div>
<div class="t" style="left:647.00px;transform-origin:0 50%;top:252.55px;font-size:5.00px;line-height:6.50px;color:#222;transform:scaleX(0.800);">3894.0</div>
<div class="t" style="left:671.00px;transform-origin:0 50%;top:252.55px;font-size:5.00px;line-height:6.50px;color:#222;transform:scaleX(0.800);">a.u.</div>
<div class="r" style="left:609.5px;top:258.53499999999997px;width:77.5px;height:7.269999999999982px;background:#f5f5f5;"></div>
<div class="r" style="left:609.5px;top:265.50499999999994px;width:77.5px;height:0.6000000000000227px;background:#e6e6e6;"></div>
<div class="t" style="left:611.00px;transform-origin:0 50%;top:259.82px;font-size:5.00px;line-height:6.50px;color:#222;transform:scaleX(0.800);">FWHM vert</div>
<div class="t" style="left:647.00px;transform-origin:0 50%;top:259.82px;font-size:5.00px;line-height:6.50px;color:#222;transform:scaleX(0.800);">177.4</div>
<div class="t" style="left:671.00px;transform-origin:0 50%;top:259.82px;font-size:5.00px;line-height:6.50px;color:#222;transform:scaleX(0.800);">Pixel</div>
<div class="r" style="left:609.5px;top:272.775px;width:77.5px;height:0.6000000000000227px;background:#e6e6e6;"></div>
<div class="t" style="left:611.00px;transform-origin:0 50%;top:267.09px;font-size:5.00px;line-height:6.50px;color:#222;transform:scaleX(0.800);">1/e² vert</div>
<div class="t" style="left:647.00px;transform-origin:0 50%;top:267.09px;font-size:5.00px;line-height:6.50px;color:#222;transform:scaleX(0.800);">301.4</div>
<div class="t" style="left:671.00px;transform-origin:0 50%;top:267.09px;font-size:5.00px;line-height:6.50px;color:#222;transform:scaleX(0.800);">Pixel</div>
<div class="r" style="left:609.5px;top:273.075px;width:77.5px;height:7.269999999999982px;background:#f5f5f5;"></div>
<div class="r" style="left:609.5px;top:280.04499999999996px;width:77.5px;height:0.6000000000000227px;background:#e6e6e6;"></div>
<div class="t" style="left:611.00px;transform-origin:0 50%;top:274.36px;font-size:5.00px;line-height:6.50px;color:#222;transform:scaleX(0.800);">μ vert</div>
<div class="t" style="left:647.00px;transform-origin:0 50%;top:274.36px;font-size:5.00px;line-height:6.50px;color:#222;transform:scaleX(0.800);">377.5</div>
<div class="t" style="left:671.00px;transform-origin:0 50%;top:274.36px;font-size:5.00px;line-height:6.50px;color:#222;transform:scaleX(0.800);">Pixel</div>
</div>
<div class="r" style="left:646px;top:98px;width:0.6000000000000227px;height:179px;background:#e3e3e3;"></div>
<div class="r" style="left:669.7px;top:98px;width:0.6000000000000227px;height:179px;background:#e3e3e3;"></div>
<div class="r" style="left:607.5px;top:277px;width:83.0px;height:3px;background:#f0f0f0;"></div>
<div class="r" style="left:690.5px;top:85px;width:8.0px;height:190.5px;background:#f0f0f0;"></div>
<div class="r" style="left:692px;top:115px;width:5.5px;height:56.30000000000001px;background:#cdcdcd;"></div>
<div class="r" style="left:692.8px;top:88px;width:0;height:0;border-left:1.2px solid transparent;border-right:1.2px solid transparent;border-bottom:1.3px solid #606060"></div>
<div class="r" style="left:692.8px;top:271.5px;width:0;height:0;border-left:1.2px solid transparent;border-right:1.2px solid transparent;border-top:1.3px solid #606060"></div>
<div class="t" style="left:608.30px;transform-origin:0 50%;top:279.34px;font-size:7.02px;line-height:9.13px;color:#111;font-weight:bold;transform:scaleX(0.926);">Tool Execution Order</div>
<div class="r" style="left:676px;top:284px;width:22px;height:0.6000000000000227px;background:#d0d0d0;"></div>
<div class="t" style="left:608.00px;transform-origin:0 50%;top:289.39px;font-size:4.62px;line-height:6.01px;color:#333;font-style:italic;transform:scaleX(0.800);">Drag items to change order.</div>
<div class="r" style="left:607.5px;top:296.5px;width:91.5px;height:111.5px;background:#f0f0f0;box-shadow:inset 0 0 0 0.6px #c8c8c8;"></div>
<div class="r" style="left:609px;top:297.40000000000003px;width:81px;height:10.399999999999977px;background:#f5f5f5;box-shadow:inset 0 0 0 0.6px #dddddd;"></div>
<svg class="r" style="left:610.5px;top:301.00px" width="4" height="3.4" viewBox="0 0 10 10"><path d="M0.5 1.5 H9.5 M0.5 5 H9.5 M0.5 8.5 H9.5" stroke="#555" stroke-width="1.6"/></svg>
<svg class="r" style="left:617px;top:300.40000000000003px" width="4.7" height="4.7" viewBox="0 0 10 10"><rect x="0.6" y="0.6" width="8.8" height="8.8" fill="#fff" stroke="#333" stroke-width="1.5"/></svg>
<div class="t" style="left:624.00px;transform-origin:0 50%;top:300.41px;font-size:4.75px;line-height:6.17px;color:#222;transform:scaleX(0.800);">Position</div>
<div class="r" style="left:662px;top:298.6px;width:26.600000000000023px;height:8.0px;background:#e1e1e1;box-shadow:inset 0 0 0 0.6px #adadad;"></div>
<div class="t" style="left:625.30px;width:100px;text-align:center;transform-origin:50% 50%;top:300.37px;font-size:4.81px;line-height:6.26px;color:#111;transform:scaleX(0.800);">Configure</div>
<div class="r" style="left:609px;top:309.75000000000006px;width:81px;height:10.399999999999977px;background:#f5f5f5;box-shadow:inset 0 0 0 0.6px #dddddd;"></div>
<svg class="r" style="left:610.5px;top:313.35px" width="4" height="3.4" viewBox="0 0 10 10"><path d="M0.5 1.5 H9.5 M0.5 5 H9.5 M0.5 8.5 H9.5" stroke="#555" stroke-width="1.6"/></svg>
<svg class="r" style="left:617px;top:312.75000000000006px" width="4.7" height="4.7" viewBox="0 0 10 10"><rect x="0.6" y="0.6" width="8.8" height="8.8" fill="#fff" stroke="#333" stroke-width="1.5"/></svg>
<div class="t" style="left:624.00px;transform-origin:0 50%;top:312.76px;font-size:4.75px;line-height:6.17px;color:#222;transform:scaleX(0.800);">Peak</div>
<div class="r" style="left:662px;top:310.95000000000005px;width:26.600000000000023px;height:8.0px;background:#e1e1e1;box-shadow:inset 0 0 0 0.6px #adadad;"></div>
<div class="t" style="left:625.30px;width:100px;text-align:center;transform-origin:50% 50%;top:312.72px;font-size:4.81px;line-height:6.26px;color:#111;transform:scaleX(0.800);">Configure</div>
<div class="r" style="left:609px;top:322.1px;width:81px;height:10.399999999999977px;background:#f5f5f5;box-shadow:inset 0 0 0 0.6px #dddddd;"></div>
<svg class="r" style="left:610.5px;top:325.70px" width="4" height="3.4" viewBox="0 0 10 10"><path d="M0.5 1.5 H9.5 M0.5 5 H9.5 M0.5 8.5 H9.5" stroke="#555" stroke-width="1.6"/></svg>
<svg class="r" style="left:617px;top:325.1px" width="4.7" height="4.7" viewBox="0 0 10 10"><rect x="0.6" y="0.6" width="8.8" height="8.8" fill="#fff" stroke="#333" stroke-width="1.5"/></svg>
<div class="t" style="left:624.00px;transform-origin:0 50%;top:325.11px;font-size:4.75px;line-height:6.17px;color:#222;transform:scaleX(0.800);">Centroid</div>
<div class="r" style="left:662px;top:323.3px;width:26.600000000000023px;height:8.0px;background:#e1e1e1;box-shadow:inset 0 0 0 0.6px #adadad;"></div>
<div class="t" style="left:625.30px;width:100px;text-align:center;transform-origin:50% 50%;top:325.07px;font-size:4.81px;line-height:6.26px;color:#111;transform:scaleX(0.800);">Configure</div>
<div class="r" style="left:609px;top:334.45000000000005px;width:81px;height:10.399999999999977px;background:#f5f5f5;box-shadow:inset 0 0 0 0.6px #dddddd;"></div>
<svg class="r" style="left:610.5px;top:338.05px" width="4" height="3.4" viewBox="0 0 10 10"><path d="M0.5 1.5 H9.5 M0.5 5 H9.5 M0.5 8.5 H9.5" stroke="#555" stroke-width="1.6"/></svg>
<svg class="r" style="left:617px;top:337.45000000000005px" width="4.7" height="4.7" viewBox="0 0 10 10"><rect x="0.6" y="0.6" width="8.8" height="8.8" fill="#fff" stroke="#333" stroke-width="1.5"/><path d="M1.8 4.6 L4.2 7.2 L8.4 2.4" fill="none" stroke="#222" stroke-width="2.1"/></svg>
<div class="t" style="left:624.00px;transform-origin:0 50%;top:337.46px;font-size:4.75px;line-height:6.17px;color:#222;transform:scaleX(0.800);">Peak Profile</div>
<div class="r" style="left:662px;top:335.65000000000003px;width:26.600000000000023px;height:8.0px;background:#e1e1e1;box-shadow:inset 0 0 0 0.6px #adadad;"></div>
<div class="t" style="left:625.30px;width:100px;text-align:center;transform-origin:50% 50%;top:337.42px;font-size:4.81px;line-height:6.26px;color:#111;transform:scaleX(0.800);">Configure</div>
<div class="r" style="left:609px;top:346.8px;width:81px;height:10.399999999999977px;background:#f5f5f5;box-shadow:inset 0 0 0 0.6px #dddddd;"></div>
<svg class="r" style="left:610.5px;top:350.40px" width="4" height="3.4" viewBox="0 0 10 10"><path d="M0.5 1.5 H9.5 M0.5 5 H9.5 M0.5 8.5 H9.5" stroke="#555" stroke-width="1.6"/></svg>
<svg class="r" style="left:617px;top:349.8px" width="4.7" height="4.7" viewBox="0 0 10 10"><rect x="0.6" y="0.6" width="8.8" height="8.8" fill="#fff" stroke="#333" stroke-width="1.5"/></svg>
<div class="t" style="left:624.00px;transform-origin:0 50%;top:349.81px;font-size:4.75px;line-height:6.17px;color:#222;transform:scaleX(0.800);">Statistics</div>
<div class="r" style="left:662px;top:348.0px;width:26.600000000000023px;height:8.0px;background:#e1e1e1;box-shadow:inset 0 0 0 0.6px #adadad;"></div>
<div class="t" style="left:625.30px;width:100px;text-align:center;transform-origin:50% 50%;top:349.77px;font-size:4.81px;line-height:6.26px;color:#111;transform:scaleX(0.800);">Configure</div>
<div class="r" style="left:609px;top:359.15000000000003px;width:81px;height:10.399999999999977px;background:#f5f5f5;box-shadow:inset 0 0 0 0.6px #dddddd;"></div>
<svg class="r" style="left:610.5px;top:362.75px" width="4" height="3.4" viewBox="0 0 10 10"><path d="M0.5 1.5 H9.5 M0.5 5 H9.5 M0.5 8.5 H9.5" stroke="#555" stroke-width="1.6"/></svg>
<svg class="r" style="left:617px;top:362.15000000000003px" width="4.7" height="4.7" viewBox="0 0 10 10"><rect x="0.6" y="0.6" width="8.8" height="8.8" fill="#fff" stroke="#333" stroke-width="1.5"/></svg>
<div class="t" style="left:624.00px;transform-origin:0 50%;top:362.16px;font-size:4.75px;line-height:6.17px;color:#222;transform:scaleX(0.800);">Histogram</div>
<div class="r" style="left:662px;top:360.35px;width:26.600000000000023px;height:8.0px;background:#e1e1e1;box-shadow:inset 0 0 0 0.6px #adadad;"></div>
<div class="t" style="left:625.30px;width:100px;text-align:center;transform-origin:50% 50%;top:362.12px;font-size:4.81px;line-height:6.26px;color:#111;transform:scaleX(0.800);">Configure</div>
<div class="r" style="left:609px;top:371.50000000000006px;width:81px;height:10.399999999999977px;background:#f5f5f5;box-shadow:inset 0 0 0 0.6px #dddddd;"></div>
<svg class="r" style="left:610.5px;top:375.10px" width="4" height="3.4" viewBox="0 0 10 10"><path d="M0.5 1.5 H9.5 M0.5 5 H9.5 M0.5 8.5 H9.5" stroke="#555" stroke-width="1.6"/></svg>
<svg class="r" style="left:617px;top:374.50000000000006px" width="4.7" height="4.7" viewBox="0 0 10 10"><rect x="0.6" y="0.6" width="8.8" height="8.8" fill="#fff" stroke="#333" stroke-width="1.5"/><path d="M1.8 4.6 L4.2 7.2 L8.4 2.4" fill="none" stroke="#222" stroke-width="2.1"/></svg>
<div class="t" style="left:624.00px;transform-origin:0 50%;top:374.51px;font-size:4.75px;line-height:6.17px;color:#222;transform:scaleX(0.800);">Noise Reduction</div>
<div class="r" style="left:662px;top:372.70000000000005px;width:26.600000000000023px;height:8.0px;background:#e1e1e1;box-shadow:inset 0 0 0 0.6px #adadad;"></div>
<div class="t" style="left:625.30px;width:100px;text-align:center;transform-origin:50% 50%;top:374.47px;font-size:4.81px;line-height:6.26px;color:#111;transform:scaleX(0.800);">Configure</div>
<div class="r" style="left:609px;top:383.85px;width:81px;height:10.399999999999977px;background:#f5f5f5;box-shadow:inset 0 0 0 0.6px #dddddd;"></div>
<svg class="r" style="left:610.5px;top:387.45px" width="4" height="3.4" viewBox="0 0 10 10"><path d="M0.5 1.5 H9.5 M0.5 5 H9.5 M0.5 8.5 H9.5" stroke="#555" stroke-width="1.6"/></svg>
<svg class="r" style="left:617px;top:386.85px" width="4.7" height="4.7" viewBox="0 0 10 10"><rect x="0.6" y="0.6" width="8.8" height="8.8" fill="#fff" stroke="#333" stroke-width="1.5"/></svg>
<div class="t" style="left:624.00px;transform-origin:0 50%;top:386.86px;font-size:4.75px;line-height:6.17px;color:#222;transform:scaleX(0.800);">Offset</div>
<div class="r" style="left:662px;top:385.05px;width:26.600000000000023px;height:8.0px;background:#e1e1e1;box-shadow:inset 0 0 0 0.6px #adadad;"></div>
<div class="t" style="left:625.30px;width:100px;text-align:center;transform-origin:50% 50%;top:386.82px;font-size:4.81px;line-height:6.26px;color:#111;transform:scaleX(0.800);">Configure</div>
<div class="r" style="left:609px;top:396.20000000000005px;width:81px;height:10.399999999999977px;background:#f5f5f5;box-shadow:inset 0 0 0 0.6px #dddddd;"></div>
<svg class="r" style="left:610.5px;top:399.80px" width="4" height="3.4" viewBox="0 0 10 10"><path d="M0.5 1.5 H9.5 M0.5 5 H9.5 M0.5 8.5 H9.5" stroke="#555" stroke-width="1.6"/></svg>
<svg class="r" style="left:617px;top:399.20000000000005px" width="4.7" height="4.7" viewBox="0 0 10 10"><rect x="0.6" y="0.6" width="8.8" height="8.8" fill="#fff" stroke="#333" stroke-width="1.5"/></svg>
<div class="t" style="left:624.00px;transform-origin:0 50%;top:399.21px;font-size:4.75px;line-height:6.17px;color:#222;transform:scaleX(0.800);">Contrast</div>
<div class="r" style="left:662px;top:397.40000000000003px;width:26.600000000000023px;height:8.0px;background:#e1e1e1;box-shadow:inset 0 0 0 0.6px #adadad;"></div>
<div class="t" style="left:625.30px;width:100px;text-align:center;transform-origin:50% 50%;top:399.17px;font-size:4.81px;line-height:6.26px;color:#111;transform:scaleX(0.800);">Configure</div>
<div class="r" style="left:690.8px;top:297px;width:6.7000000000000455px;height:112px;background:#f0f0f0;"></div>
<div class="r" style="left:691.5px;top:312.2px;width:5.100000000000023px;height:91.80000000000001px;background:#cdcdcd;"></div>
<div class="r" style="left:692.8px;top:298.3px;width:0;height:0;border-left:1.2px solid transparent;border-right:1.2px solid transparent;border-bottom:1.3px solid #606060"></div>
<div class="r" style="left:692.8px;top:406.3px;width:0;height:0;border-left:1.2px solid transparent;border-right:1.2px solid transparent;border-top:1.3px solid #606060"></div>
<div class="r" style="left:411.6px;top:225.2px;width:115.69999999999993px;height:177.40000000000003px;background:#f0f0f0;box-shadow:0 0 2px rgba(0,0,0,0.35);border:0.5px solid #aaa"></div>
<div class="r" style="left:411.6px;top:225.2px;width:115.69999999999993px;height:9.300000000000011px;background:#f9f9f9;"></div>
<div class="t" style="left:413.80px;transform-origin:0 50%;top:227.21px;font-size:5.38px;line-height:6.99px;color:#8c8c8c;transform:scaleX(0.800);">Configuration Peak Profile Tool</div>
<div class="r" style="left:519.8px;top:227.2px;width:6.0px;height:6.0px;background:#e6e6e6;"></div>
<div class="r" style="left:415.8px;top:241px;width:106.69999999999999px;height:25px;background:#f0f0f0;box-shadow:inset 0 0 0 0.6px #dcdcdc;"></div>
<div class="r" style="left:417px;top:238px;width:38px;height:6px;background:#f0f0f0;"></div>
<svg class="r" style="left:417.5px;top:239px" width="4.7" height="4.7" viewBox="0 0 10 10"><rect x="0.6" y="0.6" width="8.8" height="8.8" fill="#fff" stroke="#333" stroke-width="1.5"/><path d="M1.8 4.6 L4.2 7.2 L8.4 2.4" fill="none" stroke="#222" stroke-width="2.1"/></svg>
<div class="t" style="left:424.00px;transform-origin:0 50%;top:239.11px;font-size:4.75px;line-height:6.17px;color:#111;transform:scaleX(0.800);">Gaussian Fitting</div>
<svg class="r" style="left:420.5px;top:249.3px" width="4.7" height="4.7" viewBox="0 0 10 10"><rect x="0.6" y="0.6" width="8.8" height="8.8" fill="#fff" stroke="#333" stroke-width="1.5"/><path d="M1.8 4.6 L4.2 7.2 L8.4 2.4" fill="none" stroke="#222" stroke-width="2.1"/></svg>
<div class="t" style="left:427.00px;transform-origin:0 50%;top:249.31px;font-size:4.75px;line-height:6.17px;color:#111;transform:scaleX(0.800);">Calculate between Position Markers only</div>
<div class="t" style="left:420.00px;transform-origin:0 50%;top:258.01px;font-size:4.75px;line-height:6.17px;color:#111;transform:scaleX(0.800);">Ignore values below</div>
<div class="r" style="left:457.5px;top:257px;width:24.5px;height:6.5px;background:#ffffff;box-shadow:inset 0 0 0 0.6px #a0a0a0;"></div>
<div class="t" style="right:223.60px;transform-origin:100% 50%;top:258.02px;font-size:4.81px;line-height:6.26px;color:#000;transform:scaleX(0.800);">0,00 %</div>
<svg class="r" style="left:0;top:0" width="1" height="1" viewBox="0 0 1 1"><rect x="477.70" y="257.60" width="3.7" height="5.30" fill="#f4f4f4" stroke="#c8c8c8" stroke-width="0.4"/><path d="M478.70 259.75 L480.70 259.75 L479.70 258.45 Z M478.70 260.75 L480.70 260.75 L479.70 262.05 Z" fill="#222"/></svg>
<div class="t" style="left:485.00px;transform-origin:0 50%;top:258.01px;font-size:4.75px;line-height:6.17px;color:#111;transform:scaleX(0.800);">of Peak.</div>
<div class="r" style="left:415.8px;top:272.4px;width:106.69999999999999px;height:16.600000000000023px;background:#f0f0f0;box-shadow:inset 0 0 0 0.6px #dcdcdc;"></div>
<div class="r" style="left:417.8px;top:269.9px;width:36.400000000000034px;height:5.0px;background:#f0f0f0;"></div>
<div class="t" style="left:418.80px;transform-origin:0 50%;top:270.21px;font-size:4.75px;line-height:6.17px;color:#222;transform:scaleX(0.800);">Region of Interest</div>
<div class="t" style="left:419.50px;transform-origin:0 50%;top:279.81px;font-size:4.75px;line-height:6.17px;color:#111;transform:scaleX(0.800);">Choose Region</div>
<div class="r" style="left:485px;top:278.5px;width:35px;height:6.5px;background:#e1e1e1;box-shadow:inset 0 0 0 0.6px #adadad;"></div>
<div class="t" style="left:486.20px;transform-origin:0 50%;top:279.52px;font-size:4.81px;line-height:6.26px;color:#000;transform:scaleX(0.800);">Image</div>
<div class="r" style="left:516px;top:281.15px;width:0;height:0;border-left:1.3px solid transparent;border-right:1.3px solid transparent;border-top:1.5px solid #222"></div>
<div class="r" style="left:415.8px;top:294px;width:106.69999999999999px;height:16px;background:#f0f0f0;box-shadow:inset 0 0 0 0.6px #dcdcdc;"></div>
<div class="r" style="left:417.8px;top:291.5px;width:36.400000000000034px;height:5.0px;background:#f0f0f0;"></div>
<div class="t" style="left:418.80px;transform-origin:0 50%;top:291.81px;font-size:4.75px;line-height:6.17px;color:#222;transform:scaleX(0.800);">Peak Determination</div>
<div class="t" style="left:419.50px;transform-origin:0 50%;top:301.81px;font-size:4.75px;line-height:6.17px;color:#111;transform:scaleX(0.800);">Peak Determination Method</div>
<div class="r" style="left:477px;top:300.5px;width:41.5px;height:7.0px;background:#e1e1e1;box-shadow:inset 0 0 0 0.6px #adadad;"></div>
<div class="t" style="left:478.20px;transform-origin:0 50%;top:301.77px;font-size:4.81px;line-height:6.26px;color:#000;transform:scaleX(0.800);">Calculate Centroid</div>
<div class="r" style="left:514.5px;top:303.4px;width:0;height:0;border-left:1.3px solid transparent;border-right:1.3px solid transparent;border-top:1.5px solid #222"></div>
<div class="r" style="left:415.8px;top:317.2px;width:106.69999999999999px;height:16.400000000000034px;background:#f0f0f0;box-shadow:inset 0 0 0 0.6px #dcdcdc;"></div>
<div class="r" style="left:417.8px;top:314.7px;width:18.850000000000023px;height:5.0px;background:#f0f0f0;"></div>
<div class="t" style="left:418.80px;transform-origin:0 50%;top:315.01px;font-size:4.75px;line-height:6.17px;color:#222;transform:scaleX(0.800);">Averaging</div>
<div class="t" style="left:419.50px;transform-origin:0 50%;top:324.81px;font-size:4.75px;line-height:6.17px;color:#111;transform:scaleX(0.800);">Profile Averaging</div>
<div class="r" style="left:415.8px;top:339.3px;width:106.69999999999999px;height:15.699999999999989px;background:#f0f0f0;box-shadow:inset 0 0 0 0.6px #dcdcdc;"></div>
<div class="r" style="left:417.8px;top:336.8px;width:57.85000000000002px;height:5.0px;background:#f0f0f0;"></div>
<div class="t" style="left:418.80px;transform-origin:0 50%;top:337.11px;font-size:4.75px;line-height:6.17px;color:#222;transform:scaleX(0.800);">Linear/Logarithmic Axis Scale</div>
<div class="t" style="left:419.50px;transform-origin:0 50%;top:347.31px;font-size:4.75px;line-height:6.17px;color:#111;transform:scaleX(0.800);">Y Axis</div>
<div class="r" style="left:415.8px;top:361.4px;width:106.69999999999999px;height:16.100000000000023px;background:#f0f0f0;box-shadow:inset 0 0 0 0.6px #dcdcdc;"></div>
<div class="r" style="left:417.8px;top:358.9px;width:9.100000000000023px;height:5.0px;background:#f0f0f0;"></div>
<div class="t" style="left:418.80px;transform-origin:0 50%;top:359.21px;font-size:4.75px;line-height:6.17px;color:#222;transform:scaleX(0.800);">Unit</div>
<div class="t" style="left:419.50px;transform-origin:0 50%;top:368.41px;font-size:4.75px;line-height:6.17px;color:#111;transform:scaleX(0.800);">Unit of Length</div>
<div class="r" style="left:447.4px;top:367.2px;width:32.60000000000002px;height:7.0px;background:#e1e1e1;box-shadow:inset 0 0 0 0.6px #adadad;"></div>
<div class="t" style="left:448.60px;transform-origin:0 50%;top:368.47px;font-size:4.81px;line-height:6.26px;color:#000;transform:scaleX(0.800);">Pixel</div>
<div class="r" style="left:476px;top:370.09999999999997px;width:0;height:0;border-left:1.3px solid transparent;border-right:1.3px solid transparent;border-top:1.5px solid #222"></div>
<div class="r" style="left:415.8px;top:382.5px;width:106.69999999999999px;height:16.5px;background:#f0f0f0;box-shadow:inset 0 0 0 0.6px #dcdcdc;"></div>
<div class="r" style="left:417.8px;top:380.0px;width:24.69999999999999px;height:5.0px;background:#f0f0f0;"></div>
<div class="t" style="left:418.80px;transform-origin:0 50%;top:380.31px;font-size:4.75px;line-height:6.17px;color:#222;transform:scaleX(0.800);">Profile View</div>
<svg class="r" style="left:419.2px;top:389.4px" width="4.7" height="4.7" viewBox="0 0 10 10"><rect x="0.6" y="0.6" width="8.8" height="8.8" fill="#fff" stroke="#333" stroke-width="1.5"/><path d="M1.8 4.6 L4.2 7.2 L8.4 2.4" fill="none" stroke="#222" stroke-width="2.1"/></svg>
<div class="t" style="left:425.80px;transform-origin:0 50%;top:389.51px;font-size:4.75px;line-height:6.17px;color:#111;transform:scaleX(0.800);">Normalize Profile</div>
<div class="r" style="left:468.8px;top:316.7px;width:103.90000000000003px;height:80.30000000000001px;background:#f0f0f0;box-shadow:0 0 2px rgba(0,0,0,0.35);border:0.5px solid #aaa"></div>
<div class="r" style="left:468.8px;top:316.7px;width:103.90000000000003px;height:9.300000000000011px;background:#f9f9f9;"></div>
<div class="t" style="left:471.00px;transform-origin:0 50%;top:318.71px;font-size:5.38px;line-height:6.99px;color:#8c8c8c;transform:scaleX(0.800);">Configuration Noise Reduction Tool</div>
<div class="r" style="left:565.2px;top:318.7px;width:6.0px;height:6.0px;background:#e6e6e6;"></div>
<div class="r" style="left:474px;top:332.3px;width:95.5px;height:18.19999999999999px;background:#f0f0f0;box-shadow:inset 0 0 0 0.6px #dcdcdc;"></div>
<div class="r" style="left:476px;top:329.8px;width:36.39999999999998px;height:5.0px;background:#f0f0f0;"></div>
<div class="t" style="left:477.00px;transform-origin:0 50%;top:330.11px;font-size:4.75px;line-height:6.17px;color:#222;transform:scaleX(0.800);">Region of Interest</div>
<div class="t" style="left:477.50px;transform-origin:0 50%;top:340.81px;font-size:4.75px;line-height:6.17px;color:#111;transform:scaleX(0.800);">Choose Region</div>
<div class="r" style="left:530px;top:339.8px;width:34px;height:6.5px;background:#e1e1e1;box-shadow:inset 0 0 0 0.6px #adadad;"></div>
<div class="t" style="left:531.20px;transform-origin:0 50%;top:340.82px;font-size:4.81px;line-height:6.26px;color:#000;transform:scaleX(0.800);">Image</div>
<div class="r" style="left:560px;top:342.45px;width:0;height:0;border-left:1.3px solid transparent;border-right:1.3px solid transparent;border-top:1.5px solid #222"></div>
<div class="r" style="left:474px;top:355.5px;width:95.5px;height:36.0px;background:#f0f0f0;box-shadow:inset 0 0 0 0.6px #dcdcdc;"></div>
<div class="r" style="left:476px;top:353.0px;width:22.75px;height:5.0px;background:#f0f0f0;"></div>
<div class="t" style="left:477.00px;transform-origin:0 50%;top:353.31px;font-size:4.75px;line-height:6.17px;color:#222;transform:scaleX(0.800);">Used Filter</div>
<div class="t" style="left:477.50px;transform-origin:0 50%;top:363.11px;font-size:4.75px;line-height:6.17px;color:#111;transform:scaleX(0.800);">Choose Filter</div>
<div class="r" style="left:531px;top:362px;width:33px;height:6.5px;background:#e1e1e1;box-shadow:inset 0 0 0 0.6px #adadad;"></div>
<div class="t" style="left:532.20px;transform-origin:0 50%;top:363.02px;font-size:4.81px;line-height:6.26px;color:#000;transform:scaleX(0.800);">Gaussian</div>
<div class="r" style="left:560px;top:364.65px;width:0;height:0;border-left:1.3px solid transparent;border-right:1.3px solid transparent;border-top:1.5px solid #222"></div>
<div class="t" style="left:477.50px;transform-origin:0 50%;top:372.61px;font-size:4.75px;line-height:6.17px;color:#111;transform:scaleX(0.800);">Masksize</div>
<div class="r" style="left:531px;top:371.5px;width:33px;height:6.5px;background:#e1e1e1;box-shadow:inset 0 0 0 0.6px #adadad;"></div>
<div class="t" style="left:532.20px;transform-origin:0 50%;top:372.52px;font-size:4.81px;line-height:6.26px;color:#000;transform:scaleX(0.800);">5</div>
<div class="r" style="left:560px;top:374.15px;width:0;height:0;border-left:1.3px solid transparent;border-right:1.3px solid transparent;border-top:1.5px solid #222"></div>
<div class="t" style="right:144.00px;transform-origin:100% 50%;top:372.77px;font-size:4.50px;line-height:5.85px;color:#111;transform:scaleX(0.800);">px</div>
<div class="t" style="left:477.50px;transform-origin:0 50%;top:382.11px;font-size:4.75px;line-height:6.17px;color:#111;transform:scaleX(0.800);">Double Standard Deviation</div>
<div class="r" style="left:531px;top:381px;width:33px;height:6.5px;background:#ffffff;box-shadow:inset 0 0 0 0.6px #a0a0a0;"></div>
<div class="t" style="right:141.60px;transform-origin:100% 50%;top:382.02px;font-size:4.81px;line-height:6.26px;color:#000;transform:scaleX(0.800);"></div>
<svg class="r" style="left:0;top:0" width="1" height="1" viewBox="0 0 1 1"><rect x="559.70" y="381.60" width="3.7" height="5.30" fill="#f4f4f4" stroke="#c8c8c8" stroke-width="0.4"/><path d="M560.70 383.75 L562.70 383.75 L561.70 382.45 Z M560.70 384.75 L562.70 384.75 L561.70 386.05 Z" fill="#222"/></svg>
<div class="t" style="left:532.50px;transform-origin:0 50%;top:382.11px;font-size:4.75px;line-height:6.17px;color:#111;transform:scaleX(0.800);">1,00</div>
<div class="t" style="right:142.00px;transform-origin:100% 50%;top:382.27px;font-size:4.50px;line-height:5.85px;color:#111;transform:scaleX(0.800);">px</div>
</div></body></html>
